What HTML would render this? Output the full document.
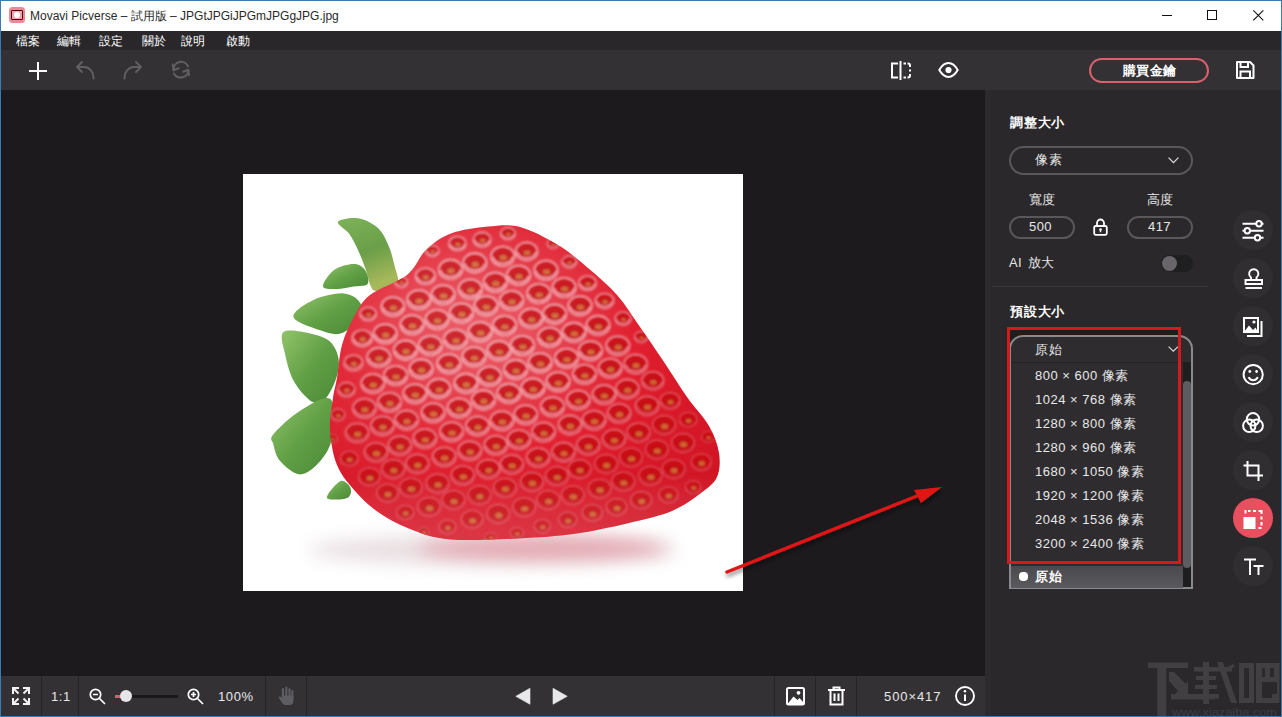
<!DOCTYPE html>
<html><head><meta charset="utf-8">
<style>
*{margin:0;padding:0;box-sizing:border-box}
html,body{width:1282px;height:717px;overflow:hidden;background:#1c1a1d;font-family:"Liberation Sans",sans-serif}
.a{position:absolute}
#win{position:absolute;left:0;top:0;width:1282px;height:717px;border:1px solid #3b7bb3;overflow:hidden;background:#1c1a1d}
#title{left:0;top:0;width:1280px;height:30px;background:#fff}
#menu{left:0;top:30px;width:1280px;height:19px;background:#29272a;color:#fff;font-size:12px}
#menu span{position:absolute;top:2px;white-space:nowrap}
#tool{left:0;top:49px;width:1280px;height:40px;background:#333134}
#canvas{left:0;top:89px;width:984px;height:586px;background:#1c1a1d}
#panel{left:984px;top:89px;width:296px;height:626px;background:#2a282b}
#bottom{left:0;top:675px;width:984px;height:40px;background:#333134}
.div{position:absolute;top:0;width:1px;height:40px;background:#242326}
.txt{position:absolute;white-space:nowrap;color:#fff}
#panel .txt{margin-top:-1px;letter-spacing:.4px}
#panel .li{letter-spacing:.5px;word-spacing:0}
#bottom .txt{letter-spacing:.6px}
svg{position:absolute;overflow:visible}
</style></head><body>
<div id="win">
<div id="title" class="a">
  <div class="a" style="left:8px;top:6px;width:15.5px;height:15.5px;border-radius:3.5px;background:#ea8a96"></div>
  <div class="a" style="left:10px;top:9px;width:12px;height:10px;border:1.5px solid #4a0812;border-radius:1px;background:#f2a4ae"></div>
  <div class="a" style="left:13.2px;top:11.2px;width:5.6px;height:5.6px;border-radius:3px;background:#fff"></div>
  <div class="txt" style="left:29px;top:7px;font-size:12px;color:#2a2a2a">Movavi Picverse – 試用版 – JPGtJPGiJPGmJPGgJPG.jpg</div>
  <div class="a" style="left:1161px;top:14px;width:10px;height:1px;background:#111"></div>
  <div class="a" style="left:1206px;top:9px;width:10px;height:10px;border:1px solid #111"></div>
  <svg style="left:1252px;top:8.8px" width="11" height="11" viewBox="0 0 11 11"><path d="M0.3 0.3L10.3 10.3M10.3 0.3L0.3 10.3" stroke="#111" stroke-width="1.1"/></svg>
</div>
<div id="menu" class="a">
  <span style="left:15px">檔案</span><span style="left:56px">編輯</span><span style="left:98px">設定</span><span style="left:141px">關於</span><span style="left:180px">說明</span><span style="left:225px">啟動</span>
</div>
<div id="tool" class="a">
  <svg style="left:28px;top:12px" width="18" height="18" viewBox="0 0 18 18"><path d="M9 0V18M0 9H18" stroke="#fff" stroke-width="2"/></svg>
  <svg style="left:-1px;top:-50px" width="300" height="100" viewBox="0 0 300 100"><g stroke="#605f63" stroke-width="2" fill="none" stroke-linecap="round" stroke-linejoin="round">
  <path d="M77 67H84A9.5 10.5 0 0 1 93.5 77.5V78.5M82 62L77 67L82 72"/>
  <path d="M141 67H134A9.5 10.5 0 0 0 124.5 77.5V78.5M136 62L141 67L136 72"/>
  <path d="M173.5 70A7.6 7.6 0 0 1 188 66.3M188.3 70A7.6 7.6 0 0 1 174 73.5"/>
  <path d="M172.8 64.5L173.5 70.2L178.5 68.2M189 75.2L188.3 69.8L183.3 71.8"/>
</g></svg>
  <svg style="left:889px;top:11px" width="22" height="19" viewBox="0 0 22 19"><g fill="#fff"><path d="M1 1.5H8V3.5H3V15.5H8V17.5H1Z"/><rect x="9.5" y="0" width="2" height="19"/><rect x="13.5" y="1.5" width="2.5" height="2"/><path d="M17.5 1.5H18A3 3 0 0 1 21 4.5V6H19V4.5A1 1 0 0 0 18 3.5H17.5Z"/><rect x="19" y="8.5" width="2" height="2"/><path d="M17.5 17.5H18A3 3 0 0 0 21 14.5V13H19V14.5A1 1 0 0 1 18 15.5H17.5Z"/><rect x="13.5" y="15.5" width="2.5" height="2"/></g></svg>
  <svg style="left:937px;top:12px" width="21" height="16" viewBox="0 0 21 16"><path d="M1.3 8C4.2 3 7.2 1.1 10.5 1.1S16.8 3 19.7 8C16.8 13 13.8 14.9 10.5 14.9S4.2 13 1.3 8Z" stroke="#fff" stroke-width="2" fill="none"/><circle cx="10.5" cy="8" r="3.1" fill="#fff"/></svg>
  <div class="a" style="left:1088px;top:8px;width:120px;height:25px;border:2px solid #d9606f;border-radius:13px"></div>
  <div class="txt" style="left:1122px;top:12px;font-size:13px;font-weight:bold;letter-spacing:.3px">購買金鑰</div>
  <svg style="left:1235px;top:11px" width="19" height="18" viewBox="0 0 19 18"><path d="M1 1H14L17.5 4.5V17H1Z" stroke="#fff" stroke-width="2" fill="none" stroke-linejoin="round"/><path d="M4.5 1V6H12V1M4.5 17V10.5H14V17" stroke="#fff" stroke-width="2" fill="none"/></svg>
</div>
<div id="canvas" class="a"><svg style="left:242px;top:84px" width="500" height="417" viewBox="0 0 500 417">
<defs>
<radialGradient id="bg" cx="0.4" cy="0.35" r="0.75"><stop offset="0" stop-color="#e8505c"/><stop offset="0.5" stop-color="#e01c2c"/><stop offset="1" stop-color="#d01424"/></radialGradient>
<linearGradient id="lg" x1="0" y1="0" x2="1" y2="1"><stop offset="0" stop-color="#92c46a"/><stop offset="0.5" stop-color="#62a046"/><stop offset="1" stop-color="#4a8a36"/></linearGradient><linearGradient id="lgA" x1="0" y1="0" x2="0.3" y2="1"><stop offset="0" stop-color="#7fb35a"/><stop offset="0.55" stop-color="#6a9e48"/><stop offset="1" stop-color="#a6b85a"/></linearGradient>
<clipPath id="bc"><path d="M164.0 101.0C173.3 93.5 175.7 82.9 183.0 76.0C190.3 69.1 197.7 63.4 208.0 59.5C218.3 55.6 233.5 53.6 245.0 52.5C256.5 51.4 265.3 49.9 277.0 53.0C288.7 56.1 303.7 64.2 315.0 71.0C326.3 77.8 335.2 85.7 345.0 94.0C354.8 102.3 365.3 111.2 374.0 121.0C382.7 130.8 389.2 141.8 397.0 153.0C404.8 164.2 413.2 176.3 421.0 188.0C428.8 199.7 436.5 212.3 444.0 223.0C451.5 233.7 460.7 242.7 466.0 252.0C471.3 261.3 474.7 270.5 476.0 279.0C477.3 287.5 477.0 296.3 474.0 303.0C471.0 309.7 465.5 313.3 458.0 319.0C450.5 324.7 440.3 332.2 429.0 337.0C417.7 341.8 405.3 344.3 390.0 348.0C374.7 351.7 354.8 356.3 337.0 359.0C319.2 361.7 304.5 362.9 283.0 364.0C261.5 365.1 227.3 367.0 208.0 365.5C188.7 364.0 179.2 359.6 167.0 355.0C154.8 350.4 144.2 344.3 135.0 338.0C125.8 331.7 118.8 324.8 112.0 317.0C105.2 309.2 98.2 301.2 94.0 291.0C89.8 280.8 87.7 267.2 87.0 256.0C86.3 244.8 88.8 232.7 90.0 224.0C91.2 215.3 92.5 212.8 94.0 204.0C95.5 195.2 96.2 181.2 99.0 171.0C101.8 160.8 106.3 151.3 111.0 143.0C115.7 134.7 118.2 128.0 127.0 121.0C135.8 114.0 154.7 108.5 164.0 101.0Z"/></clipPath>
<filter id="bl" x="-30%" y="-100%" width="160%" height="300%"><feGaussianBlur stdDeviation="9"/></filter>
<filter id="bl2"><feGaussianBlur stdDeviation="1"/></filter>
<radialGradient id="sheen" cx="0.38" cy="0.32" r="0.5"><stop offset="0" stop-color="#fff" stop-opacity=".12"/><stop offset="1" stop-color="#fff" stop-opacity="0"/></radialGradient>
<linearGradient id="btm" x1="0" y1="0" x2="0" y2="1"><stop offset="0.72" stop-color="#fff" stop-opacity="0"/><stop offset="0.86" stop-color="#ffd0d6" stop-opacity=".16"/></linearGradient>
</defs>
<rect width="500" height="417" fill="#fff"/>
<ellipse cx="250" cy="376" rx="185" ry="15" fill="#e3d6d9" opacity=".8" filter="url(#bl)"/><ellipse cx="300" cy="374" rx="125" ry="11" fill="#e28a98" opacity=".7" filter="url(#bl)"/>
<path d="M95.0 47.8C96.5 45.2 108.3 43.2 115.0 44.2C121.7 45.2 129.9 49.3 135.0 54.0C140.1 58.7 143.1 66.2 145.8 72.3C148.5 78.4 149.7 84.5 151.2 90.4C152.7 96.4 155.9 104.1 155.0 108.0C154.1 111.9 149.7 112.5 146.0 114.0C142.3 115.5 136.1 117.3 133.0 117.0C129.9 116.7 129.5 115.8 127.7 112.0C125.9 108.2 124.3 100.0 122.2 94.0C120.1 88.0 117.7 81.7 115.0 76.0C112.3 70.3 109.3 64.3 106.0 59.6C102.7 54.9 93.5 50.4 95.0 47.8Z" fill="url(#lgA)"/><path d="M80.0 112.5C79.5 109.3 85.9 99.8 91.0 96.0C96.1 92.2 105.5 90.0 110.7 90.0C115.9 90.0 119.7 92.7 122.0 96.0C124.3 99.3 126.6 107.0 124.7 109.7C122.8 112.5 115.8 111.6 110.7 112.5C105.6 113.4 99.1 115.0 94.0 115.0C88.9 115.0 80.5 115.7 80.0 112.5Z" fill="url(#lg)"/><path d="M50.5 142.9C49.4 137.8 62.2 129.9 70.6 126.0C79.0 122.1 93.0 118.8 100.8 119.4C108.6 120.0 115.4 125.0 117.6 129.5C119.8 134.0 117.5 141.2 114.2 146.2C110.9 151.2 103.7 157.9 97.5 159.6C91.3 161.3 85.1 159.1 77.3 156.3C69.5 153.5 51.6 148.0 50.5 142.9Z" fill="url(#lg)"/><path d="M40.5 158.0C44.7 154.6 59.5 157.9 67.3 159.6C75.1 161.3 82.7 163.5 87.4 168.0C92.2 172.5 95.0 180.1 95.8 186.5C96.6 192.9 94.9 199.9 92.4 206.6C89.9 213.3 84.9 223.3 80.7 226.7C76.5 230.0 72.3 230.0 67.3 226.7C62.3 223.3 54.7 214.4 50.5 206.6C46.3 198.8 43.7 187.9 42.0 179.8C40.3 171.7 36.3 161.4 40.5 158.0Z" fill="url(#lg)"/><path d="M30.4 260.2C34.9 254.6 47.7 242.6 57.2 236.7C66.7 230.8 82.1 220.5 87.4 225.0C92.7 229.5 90.7 253.3 89.0 263.6C87.3 273.9 82.6 280.9 77.3 287.0C72.0 293.1 63.9 300.4 57.2 300.4C50.5 300.4 41.6 292.0 37.1 287.0C32.6 282.0 31.5 274.8 30.4 270.3C29.3 265.8 25.9 265.8 30.4 260.2Z" fill="url(#lg)"/><path d="M84.0 323.9C82.9 321.1 93.6 308.7 97.5 307.0C101.4 305.3 106.4 311.1 107.5 313.9C108.6 316.7 108.1 322.2 104.2 323.9C100.3 325.6 85.1 326.7 84.0 323.9Z" fill="url(#lg)"/>
<path d="M164.0 101.0C173.3 93.5 175.7 82.9 183.0 76.0C190.3 69.1 197.7 63.4 208.0 59.5C218.3 55.6 233.5 53.6 245.0 52.5C256.5 51.4 265.3 49.9 277.0 53.0C288.7 56.1 303.7 64.2 315.0 71.0C326.3 77.8 335.2 85.7 345.0 94.0C354.8 102.3 365.3 111.2 374.0 121.0C382.7 130.8 389.2 141.8 397.0 153.0C404.8 164.2 413.2 176.3 421.0 188.0C428.8 199.7 436.5 212.3 444.0 223.0C451.5 233.7 460.7 242.7 466.0 252.0C471.3 261.3 474.7 270.5 476.0 279.0C477.3 287.5 477.0 296.3 474.0 303.0C471.0 309.7 465.5 313.3 458.0 319.0C450.5 324.7 440.3 332.2 429.0 337.0C417.7 341.8 405.3 344.3 390.0 348.0C374.7 351.7 354.8 356.3 337.0 359.0C319.2 361.7 304.5 362.9 283.0 364.0C261.5 365.1 227.3 367.0 208.0 365.5C188.7 364.0 179.2 359.6 167.0 355.0C154.8 350.4 144.2 344.3 135.0 338.0C125.8 331.7 118.8 324.8 112.0 317.0C105.2 309.2 98.2 301.2 94.0 291.0C89.8 280.8 87.7 267.2 87.0 256.0C86.3 244.8 88.8 232.7 90.0 224.0C91.2 215.3 92.5 212.8 94.0 204.0C95.5 195.2 96.2 181.2 99.0 171.0C101.8 160.8 106.3 151.3 111.0 143.0C115.7 134.7 118.2 128.0 127.0 121.0C135.8 114.0 154.7 108.5 164.0 101.0Z" fill="url(#bg)"/>
<g clip-path="url(#bc)"><g filter="url(#bl2)" opacity=".95"><ellipse cx="189.4" cy="77.0" rx="7.1" ry="6.0" fill="none" stroke="#fbc8cf" stroke-width="0.9" opacity="0.72"/><ellipse cx="189.4" cy="77.0" rx="6.1" ry="5.0" fill="#cc0816"/><ellipse cx="189.4" cy="78.0" rx="3.7" ry="3.0" fill="#b80612" opacity=".6"/><path d="M183.6 77.5A6.1 5.3 0 0 0 195.3 77.5" fill="none" stroke="#f9b4bc" stroke-width="1.1" opacity="0.90"/><ellipse cx="189.9" cy="77.8" rx="2.0" ry="1.5" fill="#d68a3c" opacity=".75"/><ellipse cx="214.4" cy="69.5" rx="9.0" ry="7.5" fill="none" stroke="#fbc8cf" stroke-width="1.2" opacity="0.72"/><ellipse cx="214.4" cy="69.5" rx="8.0" ry="6.5" fill="#cc0816"/><ellipse cx="214.4" cy="70.5" rx="4.8" ry="3.9" fill="#b80612" opacity=".6"/><path d="M206.8 70.2A8.0 6.9 0 0 0 222.0 70.2" fill="none" stroke="#f9b4bc" stroke-width="1.4" opacity="0.90"/><ellipse cx="214.9" cy="70.6" rx="2.6" ry="1.9" fill="#d68a3c" opacity=".75"/><ellipse cx="239.1" cy="65.6" rx="9.2" ry="7.7" fill="none" stroke="#fbc8cf" stroke-width="1.2" opacity="0.72"/><ellipse cx="239.1" cy="65.6" rx="8.2" ry="6.7" fill="#cc0816"/><ellipse cx="239.1" cy="66.6" rx="4.9" ry="4.0" fill="#b80612" opacity=".6"/><path d="M231.3 66.3A8.2 7.0 0 0 0 246.9 66.3" fill="none" stroke="#f9b4bc" stroke-width="1.4" opacity="0.90"/><ellipse cx="239.6" cy="66.7" rx="2.7" ry="1.9" fill="#d68a3c" opacity=".75"/><ellipse cx="264.9" cy="59.6" rx="7.8" ry="6.6" fill="none" stroke="#fbc8cf" stroke-width="1.0" opacity="0.72"/><ellipse cx="264.9" cy="59.6" rx="6.8" ry="5.6" fill="#cc0816"/><ellipse cx="264.9" cy="60.6" rx="4.1" ry="3.4" fill="#b80612" opacity=".6"/><path d="M258.4 60.2A6.8 5.9 0 0 0 271.4 60.2" fill="none" stroke="#f9b4bc" stroke-width="1.2" opacity="0.90"/><ellipse cx="265.4" cy="60.6" rx="2.2" ry="1.6" fill="#d68a3c" opacity=".75"/><ellipse cx="158.2" cy="108.2" rx="6.9" ry="5.9" fill="none" stroke="#fbc8cf" stroke-width="0.9" opacity="0.72"/><ellipse cx="158.2" cy="108.2" rx="5.9" ry="4.9" fill="#cc0816"/><ellipse cx="158.2" cy="109.2" rx="3.6" ry="2.9" fill="#b80612" opacity=".6"/><path d="M152.6 108.7A5.9 5.1 0 0 0 163.8 108.7" fill="none" stroke="#f9b4bc" stroke-width="1.1" opacity="0.90"/><ellipse cx="158.7" cy="109.0" rx="1.9" ry="1.4" fill="#d68a3c" opacity=".75"/><ellipse cx="182.4" cy="102.2" rx="10.2" ry="8.5" fill="none" stroke="#fbc8cf" stroke-width="1.3" opacity="0.72"/><ellipse cx="182.4" cy="102.2" rx="9.2" ry="7.5" fill="#cc0816"/><ellipse cx="182.4" cy="103.2" rx="5.5" ry="4.5" fill="#b80612" opacity=".6"/><path d="M173.7 103.0A9.2 7.9 0 0 0 191.2 103.0" fill="none" stroke="#f9b4bc" stroke-width="1.6" opacity="0.90"/><ellipse cx="182.9" cy="103.5" rx="3.0" ry="2.2" fill="#d68a3c" opacity=".75"/><ellipse cx="207.5" cy="95.4" rx="12.0" ry="10.0" fill="none" stroke="#fbc8cf" stroke-width="1.6" opacity="0.72"/><ellipse cx="207.5" cy="95.4" rx="11.0" ry="9.0" fill="#cc0816"/><ellipse cx="207.5" cy="96.4" rx="6.6" ry="5.4" fill="#b80612" opacity=".6"/><path d="M197.1 96.3A11.0 9.5 0 0 0 218.0 96.3" fill="none" stroke="#f9b4bc" stroke-width="1.8" opacity="0.90"/><ellipse cx="208.0" cy="96.9" rx="3.6" ry="2.6" fill="#d68a3c" opacity=".75"/><ellipse cx="231.8" cy="88.9" rx="12.0" ry="10.0" fill="none" stroke="#fbc8cf" stroke-width="1.6" opacity="0.72"/><ellipse cx="231.8" cy="88.9" rx="11.0" ry="9.0" fill="#cc0816"/><ellipse cx="231.8" cy="89.9" rx="6.6" ry="5.4" fill="#b80612" opacity=".6"/><path d="M221.4 89.8A11.0 9.5 0 0 0 242.3 89.8" fill="none" stroke="#f9b4bc" stroke-width="1.8" opacity="0.90"/><ellipse cx="232.3" cy="90.4" rx="3.6" ry="2.6" fill="#d68a3c" opacity=".75"/><ellipse cx="259.8" cy="82.2" rx="12.0" ry="10.0" fill="none" stroke="#fbc8cf" stroke-width="1.6" opacity="0.72"/><ellipse cx="259.8" cy="82.2" rx="11.0" ry="9.0" fill="#cc0816"/><ellipse cx="259.8" cy="83.2" rx="6.6" ry="5.4" fill="#b80612" opacity=".6"/><path d="M249.3 83.1A11.0 9.5 0 0 0 270.2 83.1" fill="none" stroke="#f9b4bc" stroke-width="1.8" opacity="0.90"/><ellipse cx="260.3" cy="83.7" rx="3.6" ry="2.6" fill="#d68a3c" opacity=".75"/><ellipse cx="283.6" cy="77.4" rx="11.2" ry="9.4" fill="none" stroke="#fbc8cf" stroke-width="1.5" opacity="0.72"/><ellipse cx="283.6" cy="77.4" rx="10.2" ry="8.4" fill="#cc0816"/><ellipse cx="283.6" cy="78.4" rx="6.1" ry="5.0" fill="#b80612" opacity=".6"/><path d="M273.9 78.2A10.2 8.8 0 0 0 293.3 78.2" fill="none" stroke="#f9b4bc" stroke-width="1.7" opacity="0.90"/><ellipse cx="284.1" cy="78.8" rx="3.3" ry="2.4" fill="#d68a3c" opacity=".75"/><ellipse cx="309.9" cy="69.9" rx="6.3" ry="5.3" fill="none" stroke="#fbc8cf" stroke-width="0.8" opacity="0.72"/><ellipse cx="309.9" cy="69.9" rx="5.3" ry="4.3" fill="#cc0816"/><ellipse cx="309.9" cy="70.9" rx="3.2" ry="2.6" fill="#b80612" opacity=".6"/><path d="M304.9 70.3A5.3 4.5 0 0 0 314.9 70.3" fill="none" stroke="#f9b4bc" stroke-width="1.0" opacity="0.90"/><ellipse cx="310.4" cy="70.6" rx="1.7" ry="1.2" fill="#d68a3c" opacity=".75"/><ellipse cx="125.1" cy="140.0" rx="8.6" ry="7.2" fill="none" stroke="#fbc8cf" stroke-width="1.1" opacity="0.71"/><ellipse cx="125.1" cy="140.0" rx="7.6" ry="6.2" fill="#cc0816"/><ellipse cx="125.1" cy="141.0" rx="4.6" ry="3.7" fill="#b80612" opacity=".6"/><path d="M117.9 140.6A7.6 6.5 0 0 0 132.4 140.6" fill="none" stroke="#f9b4bc" stroke-width="1.3" opacity="0.89"/><ellipse cx="125.6" cy="141.0" rx="2.5" ry="1.8" fill="#d68a3c" opacity=".75"/><ellipse cx="149.9" cy="132.6" rx="11.8" ry="9.8" fill="none" stroke="#fbc8cf" stroke-width="1.6" opacity="0.72"/><ellipse cx="149.9" cy="132.6" rx="10.8" ry="8.8" fill="#cc0816"/><ellipse cx="149.9" cy="133.6" rx="6.5" ry="5.3" fill="#b80612" opacity=".6"/><path d="M139.7 133.5A10.8 9.2 0 0 0 160.2 133.5" fill="none" stroke="#f9b4bc" stroke-width="1.8" opacity="0.90"/><ellipse cx="150.4" cy="134.1" rx="3.5" ry="2.5" fill="#d68a3c" opacity=".75"/><ellipse cx="175.8" cy="125.7" rx="12.0" ry="10.0" fill="none" stroke="#fbc8cf" stroke-width="1.6" opacity="0.72"/><ellipse cx="175.8" cy="125.7" rx="11.0" ry="9.0" fill="#cc0816"/><ellipse cx="175.8" cy="126.7" rx="6.6" ry="5.4" fill="#b80612" opacity=".6"/><path d="M165.4 126.6A11.0 9.5 0 0 0 186.3 126.6" fill="none" stroke="#f9b4bc" stroke-width="1.8" opacity="0.90"/><ellipse cx="176.3" cy="127.2" rx="3.6" ry="2.6" fill="#d68a3c" opacity=".75"/><ellipse cx="200.1" cy="120.7" rx="12.0" ry="10.0" fill="none" stroke="#fbc8cf" stroke-width="1.6" opacity="0.72"/><ellipse cx="200.1" cy="120.7" rx="11.0" ry="9.0" fill="#cc0816"/><ellipse cx="200.1" cy="121.7" rx="6.6" ry="5.4" fill="#b80612" opacity=".6"/><path d="M189.7 121.6A11.0 9.5 0 0 0 210.6 121.6" fill="none" stroke="#f9b4bc" stroke-width="1.8" opacity="0.90"/><ellipse cx="200.6" cy="122.2" rx="3.6" ry="2.6" fill="#d68a3c" opacity=".75"/><ellipse cx="227.3" cy="115.0" rx="12.0" ry="10.0" fill="none" stroke="#fbc8cf" stroke-width="1.6" opacity="0.72"/><ellipse cx="227.3" cy="115.0" rx="11.0" ry="9.0" fill="#cc0816"/><ellipse cx="227.3" cy="116.0" rx="6.6" ry="5.4" fill="#b80612" opacity=".6"/><path d="M216.9 115.9A11.0 9.5 0 0 0 237.8 115.9" fill="none" stroke="#f9b4bc" stroke-width="1.8" opacity="0.90"/><ellipse cx="227.8" cy="116.5" rx="3.6" ry="2.6" fill="#d68a3c" opacity=".75"/><ellipse cx="252.3" cy="108.2" rx="12.0" ry="10.0" fill="none" stroke="#fbc8cf" stroke-width="1.6" opacity="0.72"/><ellipse cx="252.3" cy="108.2" rx="11.0" ry="9.0" fill="#cc0816"/><ellipse cx="252.3" cy="109.2" rx="6.6" ry="5.4" fill="#b80612" opacity=".6"/><path d="M241.9 109.1A11.0 9.5 0 0 0 262.8 109.1" fill="none" stroke="#f9b4bc" stroke-width="1.8" opacity="0.90"/><ellipse cx="252.8" cy="109.7" rx="3.6" ry="2.6" fill="#d68a3c" opacity=".75"/><ellipse cx="275.6" cy="101.2" rx="12.0" ry="10.0" fill="none" stroke="#fbc8cf" stroke-width="1.6" opacity="0.72"/><ellipse cx="275.6" cy="101.2" rx="11.0" ry="9.0" fill="#cc0816"/><ellipse cx="275.6" cy="102.2" rx="6.6" ry="5.4" fill="#b80612" opacity=".6"/><path d="M265.2 102.1A11.0 9.5 0 0 0 286.1 102.1" fill="none" stroke="#f9b4bc" stroke-width="1.8" opacity="0.90"/><ellipse cx="276.1" cy="102.7" rx="3.6" ry="2.6" fill="#d68a3c" opacity=".75"/><ellipse cx="303.0" cy="96.3" rx="12.0" ry="10.0" fill="none" stroke="#fbc8cf" stroke-width="1.6" opacity="0.72"/><ellipse cx="303.0" cy="96.3" rx="11.0" ry="9.0" fill="#cc0816"/><ellipse cx="303.0" cy="97.3" rx="6.6" ry="5.4" fill="#b80612" opacity=".6"/><path d="M292.6 97.2A11.0 9.5 0 0 0 313.5 97.2" fill="none" stroke="#f9b4bc" stroke-width="1.8" opacity="0.90"/><ellipse cx="303.5" cy="97.8" rx="3.6" ry="2.6" fill="#d68a3c" opacity=".75"/><ellipse cx="326.3" cy="88.0" rx="7.8" ry="6.5" fill="none" stroke="#fbc8cf" stroke-width="1.0" opacity="0.72"/><ellipse cx="326.3" cy="88.0" rx="6.8" ry="5.5" fill="#cc0816"/><ellipse cx="326.3" cy="89.0" rx="4.1" ry="3.3" fill="#b80612" opacity=".6"/><path d="M319.9 88.5A6.8 5.8 0 0 0 332.7 88.5" fill="none" stroke="#f9b4bc" stroke-width="1.2" opacity="0.90"/><ellipse cx="326.8" cy="88.9" rx="2.2" ry="1.6" fill="#d68a3c" opacity=".75"/><ellipse cx="119.2" cy="164.2" rx="10.3" ry="8.6" fill="none" stroke="#fbc8cf" stroke-width="1.4" opacity="0.67"/><ellipse cx="119.2" cy="164.2" rx="9.3" ry="7.6" fill="#cc0816"/><ellipse cx="119.2" cy="165.2" rx="5.6" ry="4.6" fill="#b80612" opacity=".6"/><path d="M110.3 164.9A9.3 8.0 0 0 0 128.0 164.9" fill="none" stroke="#f9b4bc" stroke-width="1.6" opacity="0.84"/><ellipse cx="119.7" cy="165.5" rx="3.0" ry="2.2" fill="#d68a3c" opacity=".75"/><ellipse cx="142.2" cy="159.7" rx="12.0" ry="10.0" fill="none" stroke="#fbc8cf" stroke-width="1.6" opacity="0.72"/><ellipse cx="142.2" cy="159.7" rx="11.0" ry="9.0" fill="#cc0816"/><ellipse cx="142.2" cy="160.7" rx="6.6" ry="5.4" fill="#b80612" opacity=".6"/><path d="M131.7 160.6A11.0 9.5 0 0 0 152.6 160.6" fill="none" stroke="#f9b4bc" stroke-width="1.8" opacity="0.90"/><ellipse cx="142.7" cy="161.2" rx="3.6" ry="2.6" fill="#d68a3c" opacity=".75"/><ellipse cx="169.1" cy="150.7" rx="12.0" ry="10.0" fill="none" stroke="#fbc8cf" stroke-width="1.6" opacity="0.72"/><ellipse cx="169.1" cy="150.7" rx="11.0" ry="9.0" fill="#cc0816"/><ellipse cx="169.1" cy="151.7" rx="6.6" ry="5.4" fill="#b80612" opacity=".6"/><path d="M158.6 151.6A11.0 9.5 0 0 0 179.5 151.6" fill="none" stroke="#f9b4bc" stroke-width="1.8" opacity="0.90"/><ellipse cx="169.6" cy="152.2" rx="3.6" ry="2.6" fill="#d68a3c" opacity=".75"/><ellipse cx="194.1" cy="145.5" rx="12.0" ry="10.0" fill="none" stroke="#fbc8cf" stroke-width="1.6" opacity="0.72"/><ellipse cx="194.1" cy="145.5" rx="11.0" ry="9.0" fill="#cc0816"/><ellipse cx="194.1" cy="146.5" rx="6.6" ry="5.4" fill="#b80612" opacity=".6"/><path d="M183.6 146.4A11.0 9.5 0 0 0 204.5 146.4" fill="none" stroke="#f9b4bc" stroke-width="1.8" opacity="0.90"/><ellipse cx="194.6" cy="147.0" rx="3.6" ry="2.6" fill="#d68a3c" opacity=".75"/><ellipse cx="218.4" cy="139.0" rx="12.0" ry="10.0" fill="none" stroke="#fbc8cf" stroke-width="1.6" opacity="0.72"/><ellipse cx="218.4" cy="139.0" rx="11.0" ry="9.0" fill="#cc0816"/><ellipse cx="218.4" cy="140.0" rx="6.6" ry="5.4" fill="#b80612" opacity=".6"/><path d="M208.0 139.9A11.0 9.5 0 0 0 228.9 139.9" fill="none" stroke="#f9b4bc" stroke-width="1.8" opacity="0.90"/><ellipse cx="218.9" cy="140.5" rx="3.6" ry="2.6" fill="#d68a3c" opacity=".75"/><ellipse cx="243.0" cy="131.8" rx="12.0" ry="10.0" fill="none" stroke="#fbc8cf" stroke-width="1.6" opacity="0.72"/><ellipse cx="243.0" cy="131.8" rx="11.0" ry="9.0" fill="#cc0816"/><ellipse cx="243.0" cy="132.8" rx="6.6" ry="5.4" fill="#b80612" opacity=".6"/><path d="M232.6 132.7A11.0 9.5 0 0 0 253.5 132.7" fill="none" stroke="#f9b4bc" stroke-width="1.8" opacity="0.90"/><ellipse cx="243.5" cy="133.3" rx="3.6" ry="2.6" fill="#d68a3c" opacity=".75"/><ellipse cx="268.6" cy="126.5" rx="12.0" ry="10.0" fill="none" stroke="#fbc8cf" stroke-width="1.6" opacity="0.72"/><ellipse cx="268.6" cy="126.5" rx="11.0" ry="9.0" fill="#cc0816"/><ellipse cx="268.6" cy="127.5" rx="6.6" ry="5.4" fill="#b80612" opacity=".6"/><path d="M258.1 127.4A11.0 9.5 0 0 0 279.0 127.4" fill="none" stroke="#f9b4bc" stroke-width="1.8" opacity="0.90"/><ellipse cx="269.1" cy="128.0" rx="3.6" ry="2.6" fill="#d68a3c" opacity=".75"/><ellipse cx="295.8" cy="119.5" rx="12.0" ry="10.0" fill="none" stroke="#fbc8cf" stroke-width="1.6" opacity="0.72"/><ellipse cx="295.8" cy="119.5" rx="11.0" ry="9.0" fill="#cc0816"/><ellipse cx="295.8" cy="120.5" rx="6.6" ry="5.4" fill="#b80612" opacity=".6"/><path d="M285.4 120.4A11.0 9.5 0 0 0 306.3 120.4" fill="none" stroke="#f9b4bc" stroke-width="1.8" opacity="0.90"/><ellipse cx="296.3" cy="121.0" rx="3.6" ry="2.6" fill="#d68a3c" opacity=".75"/><ellipse cx="321.1" cy="113.5" rx="12.0" ry="10.0" fill="none" stroke="#fbc8cf" stroke-width="1.6" opacity="0.72"/><ellipse cx="321.1" cy="113.5" rx="11.0" ry="9.0" fill="#cc0816"/><ellipse cx="321.1" cy="114.5" rx="6.6" ry="5.4" fill="#b80612" opacity=".6"/><path d="M310.7 114.4A11.0 9.5 0 0 0 331.6 114.4" fill="none" stroke="#f9b4bc" stroke-width="1.8" opacity="0.90"/><ellipse cx="321.6" cy="115.0" rx="3.6" ry="2.6" fill="#d68a3c" opacity=".75"/><ellipse cx="344.5" cy="109.1" rx="9.1" ry="7.6" fill="none" stroke="#fbc8cf" stroke-width="1.2" opacity="0.72"/><ellipse cx="344.5" cy="109.1" rx="8.1" ry="6.6" fill="#cc0816"/><ellipse cx="344.5" cy="110.1" rx="4.8" ry="4.0" fill="#b80612" opacity=".6"/><path d="M336.8 109.7A8.1 6.9 0 0 0 352.2 109.7" fill="none" stroke="#f9b4bc" stroke-width="1.4" opacity="0.90"/><ellipse cx="345.0" cy="110.2" rx="2.6" ry="1.9" fill="#d68a3c" opacity=".75"/><ellipse cx="110.4" cy="188.9" rx="9.8" ry="8.2" fill="none" stroke="#fbc8cf" stroke-width="1.3" opacity="0.60"/><ellipse cx="110.4" cy="188.9" rx="8.8" ry="7.2" fill="#cc0816"/><ellipse cx="110.4" cy="189.9" rx="5.3" ry="4.3" fill="#b80612" opacity=".6"/><path d="M102.0 189.6A8.8 7.5 0 0 0 118.7 189.6" fill="none" stroke="#f9b4bc" stroke-width="1.5" opacity="0.74"/><ellipse cx="110.9" cy="190.1" rx="2.9" ry="2.1" fill="#d68a3c" opacity=".75"/><ellipse cx="135.7" cy="183.4" rx="12.0" ry="10.0" fill="none" stroke="#fbc8cf" stroke-width="1.6" opacity="0.68"/><ellipse cx="135.7" cy="183.4" rx="11.0" ry="9.0" fill="#cc0816"/><ellipse cx="135.7" cy="184.4" rx="6.6" ry="5.4" fill="#b80612" opacity=".6"/><path d="M125.3 184.3A11.0 9.5 0 0 0 146.2 184.3" fill="none" stroke="#f9b4bc" stroke-width="1.8" opacity="0.85"/><ellipse cx="136.2" cy="184.9" rx="3.6" ry="2.6" fill="#d68a3c" opacity=".75"/><ellipse cx="162.5" cy="176.1" rx="12.0" ry="10.0" fill="none" stroke="#fbc8cf" stroke-width="1.6" opacity="0.72"/><ellipse cx="162.5" cy="176.1" rx="11.0" ry="9.0" fill="#cc0816"/><ellipse cx="162.5" cy="177.1" rx="6.6" ry="5.4" fill="#b80612" opacity=".6"/><path d="M152.0 177.0A11.0 9.5 0 0 0 172.9 177.0" fill="none" stroke="#f9b4bc" stroke-width="1.8" opacity="0.90"/><ellipse cx="163.0" cy="177.6" rx="3.6" ry="2.6" fill="#d68a3c" opacity=".75"/><ellipse cx="187.3" cy="171.5" rx="12.0" ry="10.0" fill="none" stroke="#fbc8cf" stroke-width="1.6" opacity="0.72"/><ellipse cx="187.3" cy="171.5" rx="11.0" ry="9.0" fill="#cc0816"/><ellipse cx="187.3" cy="172.5" rx="6.6" ry="5.4" fill="#b80612" opacity=".6"/><path d="M176.9 172.4A11.0 9.5 0 0 0 197.8 172.4" fill="none" stroke="#f9b4bc" stroke-width="1.8" opacity="0.90"/><ellipse cx="187.8" cy="173.0" rx="3.6" ry="2.6" fill="#d68a3c" opacity=".75"/><ellipse cx="212.6" cy="165.3" rx="12.0" ry="10.0" fill="none" stroke="#fbc8cf" stroke-width="1.6" opacity="0.72"/><ellipse cx="212.6" cy="165.3" rx="11.0" ry="9.0" fill="#cc0816"/><ellipse cx="212.6" cy="166.3" rx="6.6" ry="5.4" fill="#b80612" opacity=".6"/><path d="M202.1 166.2A11.0 9.5 0 0 0 223.0 166.2" fill="none" stroke="#f9b4bc" stroke-width="1.8" opacity="0.90"/><ellipse cx="213.1" cy="166.8" rx="3.6" ry="2.6" fill="#d68a3c" opacity=".75"/><ellipse cx="237.2" cy="157.7" rx="12.0" ry="10.0" fill="none" stroke="#fbc8cf" stroke-width="1.6" opacity="0.72"/><ellipse cx="237.2" cy="157.7" rx="11.0" ry="9.0" fill="#cc0816"/><ellipse cx="237.2" cy="158.7" rx="6.6" ry="5.4" fill="#b80612" opacity=".6"/><path d="M226.7 158.6A11.0 9.5 0 0 0 247.6 158.6" fill="none" stroke="#f9b4bc" stroke-width="1.8" opacity="0.90"/><ellipse cx="237.7" cy="159.2" rx="3.6" ry="2.6" fill="#d68a3c" opacity=".75"/><ellipse cx="261.5" cy="151.5" rx="12.0" ry="10.0" fill="none" stroke="#fbc8cf" stroke-width="1.6" opacity="0.72"/><ellipse cx="261.5" cy="151.5" rx="11.0" ry="9.0" fill="#cc0816"/><ellipse cx="261.5" cy="152.5" rx="6.6" ry="5.4" fill="#b80612" opacity=".6"/><path d="M251.1 152.4A11.0 9.5 0 0 0 272.0 152.4" fill="none" stroke="#f9b4bc" stroke-width="1.8" opacity="0.90"/><ellipse cx="262.0" cy="153.0" rx="3.6" ry="2.6" fill="#d68a3c" opacity=".75"/><ellipse cx="288.2" cy="144.4" rx="12.0" ry="10.0" fill="none" stroke="#fbc8cf" stroke-width="1.6" opacity="0.72"/><ellipse cx="288.2" cy="144.4" rx="11.0" ry="9.0" fill="#cc0816"/><ellipse cx="288.2" cy="145.4" rx="6.6" ry="5.4" fill="#b80612" opacity=".6"/><path d="M277.7 145.3A11.0 9.5 0 0 0 298.6 145.3" fill="none" stroke="#f9b4bc" stroke-width="1.8" opacity="0.90"/><ellipse cx="288.7" cy="145.9" rx="3.6" ry="2.6" fill="#d68a3c" opacity=".75"/><ellipse cx="311.6" cy="140.1" rx="12.0" ry="10.0" fill="none" stroke="#fbc8cf" stroke-width="1.6" opacity="0.72"/><ellipse cx="311.6" cy="140.1" rx="11.0" ry="9.0" fill="#cc0816"/><ellipse cx="311.6" cy="141.1" rx="6.6" ry="5.4" fill="#b80612" opacity=".6"/><path d="M301.2 141.0A11.0 9.5 0 0 0 322.1 141.0" fill="none" stroke="#f9b4bc" stroke-width="1.8" opacity="0.90"/><ellipse cx="312.1" cy="141.6" rx="3.6" ry="2.6" fill="#d68a3c" opacity=".75"/><ellipse cx="337.0" cy="131.8" rx="12.0" ry="10.0" fill="none" stroke="#fbc8cf" stroke-width="1.6" opacity="0.72"/><ellipse cx="337.0" cy="131.8" rx="11.0" ry="9.0" fill="#cc0816"/><ellipse cx="337.0" cy="132.8" rx="6.6" ry="5.4" fill="#b80612" opacity=".6"/><path d="M326.6 132.7A11.0 9.5 0 0 0 347.5 132.7" fill="none" stroke="#f9b4bc" stroke-width="1.8" opacity="0.90"/><ellipse cx="337.5" cy="133.3" rx="3.6" ry="2.6" fill="#d68a3c" opacity=".75"/><ellipse cx="361.6" cy="126.9" rx="9.5" ry="7.9" fill="none" stroke="#fbc8cf" stroke-width="1.2" opacity="0.69"/><ellipse cx="361.6" cy="126.9" rx="8.5" ry="6.9" fill="#cc0816"/><ellipse cx="361.6" cy="127.9" rx="5.1" ry="4.2" fill="#b80612" opacity=".6"/><path d="M353.5 127.6A8.5 7.3 0 0 0 369.6 127.6" fill="none" stroke="#f9b4bc" stroke-width="1.5" opacity="0.86"/><ellipse cx="362.1" cy="128.1" rx="2.8" ry="2.0" fill="#d68a3c" opacity=".75"/><ellipse cx="103.5" cy="215.6" rx="9.1" ry="7.7" fill="none" stroke="#fbc8cf" stroke-width="1.2" opacity="0.49"/><ellipse cx="103.5" cy="215.6" rx="8.1" ry="6.7" fill="#cc0816"/><ellipse cx="103.5" cy="216.6" rx="4.9" ry="4.0" fill="#b80612" opacity=".6"/><path d="M95.7 216.3A8.1 7.0 0 0 0 111.2 216.3" fill="none" stroke="#f9b4bc" stroke-width="1.4" opacity="0.62"/><ellipse cx="104.0" cy="216.7" rx="2.7" ry="1.9" fill="#d68a3c" opacity=".75"/><ellipse cx="129.8" cy="209.6" rx="12.0" ry="10.0" fill="none" stroke="#fbc8cf" stroke-width="1.6" opacity="0.60"/><ellipse cx="129.8" cy="209.6" rx="11.0" ry="9.0" fill="#cc0816"/><ellipse cx="129.8" cy="210.6" rx="6.6" ry="5.4" fill="#b80612" opacity=".6"/><path d="M119.3 210.5A11.0 9.5 0 0 0 140.2 210.5" fill="none" stroke="#f9b4bc" stroke-width="1.8" opacity="0.75"/><ellipse cx="130.3" cy="211.1" rx="3.6" ry="2.6" fill="#d68a3c" opacity=".75"/><ellipse cx="152.6" cy="201.5" rx="12.0" ry="10.0" fill="none" stroke="#fbc8cf" stroke-width="1.6" opacity="0.68"/><ellipse cx="152.6" cy="201.5" rx="11.0" ry="9.0" fill="#cc0816"/><ellipse cx="152.6" cy="202.5" rx="6.6" ry="5.4" fill="#b80612" opacity=".6"/><path d="M142.2 202.4A11.0 9.5 0 0 0 163.1 202.4" fill="none" stroke="#f9b4bc" stroke-width="1.8" opacity="0.85"/><ellipse cx="153.1" cy="203.0" rx="3.6" ry="2.6" fill="#d68a3c" opacity=".75"/><ellipse cx="178.1" cy="194.9" rx="12.0" ry="10.0" fill="none" stroke="#fbc8cf" stroke-width="1.6" opacity="0.72"/><ellipse cx="178.1" cy="194.9" rx="11.0" ry="9.0" fill="#cc0816"/><ellipse cx="178.1" cy="195.9" rx="6.6" ry="5.4" fill="#b80612" opacity=".6"/><path d="M167.6 195.8A11.0 9.5 0 0 0 188.5 195.8" fill="none" stroke="#f9b4bc" stroke-width="1.8" opacity="0.90"/><ellipse cx="178.6" cy="196.4" rx="3.6" ry="2.6" fill="#d68a3c" opacity=".75"/><ellipse cx="205.9" cy="189.7" rx="12.0" ry="10.0" fill="none" stroke="#fbc8cf" stroke-width="1.6" opacity="0.72"/><ellipse cx="205.9" cy="189.7" rx="11.0" ry="9.0" fill="#cc0816"/><ellipse cx="205.9" cy="190.7" rx="6.6" ry="5.4" fill="#b80612" opacity=".6"/><path d="M195.4 190.6A11.0 9.5 0 0 0 216.3 190.6" fill="none" stroke="#f9b4bc" stroke-width="1.8" opacity="0.90"/><ellipse cx="206.4" cy="191.2" rx="3.6" ry="2.6" fill="#d68a3c" opacity=".75"/><ellipse cx="231.0" cy="182.8" rx="12.0" ry="10.0" fill="none" stroke="#fbc8cf" stroke-width="1.6" opacity="0.72"/><ellipse cx="231.0" cy="182.8" rx="11.0" ry="9.0" fill="#cc0816"/><ellipse cx="231.0" cy="183.8" rx="6.6" ry="5.4" fill="#b80612" opacity=".6"/><path d="M220.5 183.7A11.0 9.5 0 0 0 241.4 183.7" fill="none" stroke="#f9b4bc" stroke-width="1.8" opacity="0.90"/><ellipse cx="231.5" cy="184.3" rx="3.6" ry="2.6" fill="#d68a3c" opacity=".75"/><ellipse cx="256.0" cy="176.8" rx="12.0" ry="10.0" fill="none" stroke="#fbc8cf" stroke-width="1.6" opacity="0.72"/><ellipse cx="256.0" cy="176.8" rx="11.0" ry="9.0" fill="#cc0816"/><ellipse cx="256.0" cy="177.8" rx="6.6" ry="5.4" fill="#b80612" opacity=".6"/><path d="M245.6 177.7A11.0 9.5 0 0 0 266.5 177.7" fill="none" stroke="#f9b4bc" stroke-width="1.8" opacity="0.90"/><ellipse cx="256.5" cy="178.3" rx="3.6" ry="2.6" fill="#d68a3c" opacity=".75"/><ellipse cx="279.4" cy="171.5" rx="12.0" ry="10.0" fill="none" stroke="#fbc8cf" stroke-width="1.6" opacity="0.72"/><ellipse cx="279.4" cy="171.5" rx="11.0" ry="9.0" fill="#cc0816"/><ellipse cx="279.4" cy="172.5" rx="6.6" ry="5.4" fill="#b80612" opacity=".6"/><path d="M269.0 172.4A11.0 9.5 0 0 0 289.9 172.4" fill="none" stroke="#f9b4bc" stroke-width="1.8" opacity="0.90"/><ellipse cx="279.9" cy="173.0" rx="3.6" ry="2.6" fill="#d68a3c" opacity=".75"/><ellipse cx="306.7" cy="163.2" rx="12.0" ry="10.0" fill="none" stroke="#fbc8cf" stroke-width="1.6" opacity="0.72"/><ellipse cx="306.7" cy="163.2" rx="11.0" ry="9.0" fill="#cc0816"/><ellipse cx="306.7" cy="164.2" rx="6.6" ry="5.4" fill="#b80612" opacity=".6"/><path d="M296.3 164.1A11.0 9.5 0 0 0 317.2 164.1" fill="none" stroke="#f9b4bc" stroke-width="1.8" opacity="0.90"/><ellipse cx="307.2" cy="164.7" rx="3.6" ry="2.6" fill="#d68a3c" opacity=".75"/><ellipse cx="330.9" cy="158.4" rx="12.0" ry="10.0" fill="none" stroke="#fbc8cf" stroke-width="1.6" opacity="0.72"/><ellipse cx="330.9" cy="158.4" rx="11.0" ry="9.0" fill="#cc0816"/><ellipse cx="330.9" cy="159.4" rx="6.6" ry="5.4" fill="#b80612" opacity=".6"/><path d="M320.4 159.3A11.0 9.5 0 0 0 341.3 159.3" fill="none" stroke="#f9b4bc" stroke-width="1.8" opacity="0.90"/><ellipse cx="331.4" cy="159.9" rx="3.6" ry="2.6" fill="#d68a3c" opacity=".75"/><ellipse cx="355.0" cy="151.4" rx="12.0" ry="10.0" fill="none" stroke="#fbc8cf" stroke-width="1.6" opacity="0.70"/><ellipse cx="355.0" cy="151.4" rx="11.0" ry="9.0" fill="#cc0816"/><ellipse cx="355.0" cy="152.4" rx="6.6" ry="5.4" fill="#b80612" opacity=".6"/><path d="M344.5 152.3A11.0 9.5 0 0 0 365.4 152.3" fill="none" stroke="#f9b4bc" stroke-width="1.8" opacity="0.88"/><ellipse cx="355.5" cy="152.9" rx="3.6" ry="2.6" fill="#d68a3c" opacity=".75"/><ellipse cx="380.0" cy="144.6" rx="8.4" ry="7.1" fill="none" stroke="#fbc8cf" stroke-width="1.1" opacity="0.62"/><ellipse cx="380.0" cy="144.6" rx="7.4" ry="6.1" fill="#cc0816"/><ellipse cx="380.0" cy="145.6" rx="4.4" ry="3.6" fill="#b80612" opacity=".6"/><path d="M372.9 145.2A7.4 6.4 0 0 0 387.0 145.2" fill="none" stroke="#f9b4bc" stroke-width="1.3" opacity="0.78"/><ellipse cx="380.5" cy="145.6" rx="2.4" ry="1.7" fill="#d68a3c" opacity=".75"/><ellipse cx="94.9" cy="240.8" rx="7.7" ry="6.5" fill="none" stroke="#fbc8cf" stroke-width="1.0" opacity="0.36"/><ellipse cx="94.9" cy="240.8" rx="6.7" ry="5.5" fill="#cc0816"/><ellipse cx="94.9" cy="241.8" rx="4.0" ry="3.3" fill="#b80612" opacity=".6"/><path d="M88.5 241.4A6.7 5.8 0 0 0 101.3 241.4" fill="none" stroke="#f9b4bc" stroke-width="1.2" opacity="0.46"/><ellipse cx="95.4" cy="241.8" rx="2.2" ry="1.6" fill="#d68a3c" opacity=".75"/><ellipse cx="121.4" cy="234.3" rx="12.0" ry="10.0" fill="none" stroke="#fbc8cf" stroke-width="1.6" opacity="0.48"/><ellipse cx="121.4" cy="234.3" rx="11.0" ry="9.0" fill="#cc0816"/><ellipse cx="121.4" cy="235.3" rx="6.6" ry="5.4" fill="#b80612" opacity=".6"/><path d="M110.9 235.2A11.0 9.5 0 0 0 131.8 235.2" fill="none" stroke="#f9b4bc" stroke-width="1.8" opacity="0.60"/><ellipse cx="121.9" cy="235.8" rx="3.6" ry="2.6" fill="#d68a3c" opacity=".75"/><ellipse cx="146.5" cy="228.2" rx="12.0" ry="10.0" fill="none" stroke="#fbc8cf" stroke-width="1.6" opacity="0.58"/><ellipse cx="146.5" cy="228.2" rx="11.0" ry="9.0" fill="#cc0816"/><ellipse cx="146.5" cy="229.2" rx="6.6" ry="5.4" fill="#b80612" opacity=".6"/><path d="M136.1 229.1A11.0 9.5 0 0 0 157.0 229.1" fill="none" stroke="#f9b4bc" stroke-width="1.8" opacity="0.72"/><ellipse cx="147.0" cy="229.7" rx="3.6" ry="2.6" fill="#d68a3c" opacity=".75"/><ellipse cx="171.9" cy="219.7" rx="12.0" ry="10.0" fill="none" stroke="#fbc8cf" stroke-width="1.6" opacity="0.66"/><ellipse cx="171.9" cy="219.7" rx="11.0" ry="9.0" fill="#cc0816"/><ellipse cx="171.9" cy="220.7" rx="6.6" ry="5.4" fill="#b80612" opacity=".6"/><path d="M161.5 220.6A11.0 9.5 0 0 0 182.4 220.6" fill="none" stroke="#f9b4bc" stroke-width="1.8" opacity="0.82"/><ellipse cx="172.4" cy="221.2" rx="3.6" ry="2.6" fill="#d68a3c" opacity=".75"/><ellipse cx="195.8" cy="214.6" rx="12.0" ry="10.0" fill="none" stroke="#fbc8cf" stroke-width="1.6" opacity="0.71"/><ellipse cx="195.8" cy="214.6" rx="11.0" ry="9.0" fill="#cc0816"/><ellipse cx="195.8" cy="215.6" rx="6.6" ry="5.4" fill="#b80612" opacity=".6"/><path d="M185.4 215.5A11.0 9.5 0 0 0 206.3 215.5" fill="none" stroke="#f9b4bc" stroke-width="1.8" opacity="0.89"/><ellipse cx="196.3" cy="216.1" rx="3.6" ry="2.6" fill="#d68a3c" opacity=".75"/><ellipse cx="222.9" cy="209.4" rx="12.0" ry="10.0" fill="none" stroke="#fbc8cf" stroke-width="1.6" opacity="0.72"/><ellipse cx="222.9" cy="209.4" rx="11.0" ry="9.0" fill="#cc0816"/><ellipse cx="222.9" cy="210.4" rx="6.6" ry="5.4" fill="#b80612" opacity=".6"/><path d="M212.5 210.3A11.0 9.5 0 0 0 233.4 210.3" fill="none" stroke="#f9b4bc" stroke-width="1.8" opacity="0.90"/><ellipse cx="223.4" cy="210.9" rx="3.6" ry="2.6" fill="#d68a3c" opacity=".75"/><ellipse cx="246.5" cy="202.3" rx="12.0" ry="10.0" fill="none" stroke="#fbc8cf" stroke-width="1.6" opacity="0.72"/><ellipse cx="246.5" cy="202.3" rx="11.0" ry="9.0" fill="#cc0816"/><ellipse cx="246.5" cy="203.3" rx="6.6" ry="5.4" fill="#b80612" opacity=".6"/><path d="M236.1 203.2A11.0 9.5 0 0 0 257.0 203.2" fill="none" stroke="#f9b4bc" stroke-width="1.8" opacity="0.90"/><ellipse cx="247.0" cy="203.8" rx="3.6" ry="2.6" fill="#d68a3c" opacity=".75"/><ellipse cx="272.6" cy="195.6" rx="12.0" ry="10.0" fill="none" stroke="#fbc8cf" stroke-width="1.6" opacity="0.72"/><ellipse cx="272.6" cy="195.6" rx="11.0" ry="9.0" fill="#cc0816"/><ellipse cx="272.6" cy="196.6" rx="6.6" ry="5.4" fill="#b80612" opacity=".6"/><path d="M262.1 196.5A11.0 9.5 0 0 0 283.0 196.5" fill="none" stroke="#f9b4bc" stroke-width="1.8" opacity="0.90"/><ellipse cx="273.1" cy="197.1" rx="3.6" ry="2.6" fill="#d68a3c" opacity=".75"/><ellipse cx="297.1" cy="188.7" rx="12.0" ry="10.0" fill="none" stroke="#fbc8cf" stroke-width="1.6" opacity="0.72"/><ellipse cx="297.1" cy="188.7" rx="11.0" ry="9.0" fill="#cc0816"/><ellipse cx="297.1" cy="189.7" rx="6.6" ry="5.4" fill="#b80612" opacity=".6"/><path d="M286.7 189.6A11.0 9.5 0 0 0 307.6 189.6" fill="none" stroke="#f9b4bc" stroke-width="1.8" opacity="0.90"/><ellipse cx="297.6" cy="190.2" rx="3.6" ry="2.6" fill="#d68a3c" opacity=".75"/><ellipse cx="323.5" cy="184.3" rx="12.0" ry="10.0" fill="none" stroke="#fbc8cf" stroke-width="1.6" opacity="0.72"/><ellipse cx="323.5" cy="184.3" rx="11.0" ry="9.0" fill="#cc0816"/><ellipse cx="323.5" cy="185.3" rx="6.6" ry="5.4" fill="#b80612" opacity=".6"/><path d="M313.0 185.2A11.0 9.5 0 0 0 333.9 185.2" fill="none" stroke="#f9b4bc" stroke-width="1.8" opacity="0.90"/><ellipse cx="324.0" cy="185.8" rx="3.6" ry="2.6" fill="#d68a3c" opacity=".75"/><ellipse cx="347.5" cy="176.7" rx="12.0" ry="10.0" fill="none" stroke="#fbc8cf" stroke-width="1.6" opacity="0.69"/><ellipse cx="347.5" cy="176.7" rx="11.0" ry="9.0" fill="#cc0816"/><ellipse cx="347.5" cy="177.7" rx="6.6" ry="5.4" fill="#b80612" opacity=".6"/><path d="M337.0 177.6A11.0 9.5 0 0 0 357.9 177.6" fill="none" stroke="#f9b4bc" stroke-width="1.8" opacity="0.86"/><ellipse cx="348.0" cy="178.2" rx="3.6" ry="2.6" fill="#d68a3c" opacity=".75"/><ellipse cx="374.8" cy="171.8" rx="12.0" ry="10.0" fill="none" stroke="#fbc8cf" stroke-width="1.6" opacity="0.61"/><ellipse cx="374.8" cy="171.8" rx="11.0" ry="9.0" fill="#cc0816"/><ellipse cx="374.8" cy="172.8" rx="6.6" ry="5.4" fill="#b80612" opacity=".6"/><path d="M364.3 172.7A11.0 9.5 0 0 0 385.2 172.7" fill="none" stroke="#f9b4bc" stroke-width="1.8" opacity="0.77"/><ellipse cx="375.3" cy="173.3" rx="3.6" ry="2.6" fill="#d68a3c" opacity=".75"/><ellipse cx="398.2" cy="163.0" rx="7.2" ry="6.1" fill="none" stroke="#fbc8cf" stroke-width="0.9" opacity="0.54"/><ellipse cx="398.2" cy="163.0" rx="6.2" ry="5.1" fill="#cc0816"/><ellipse cx="398.2" cy="164.0" rx="3.7" ry="3.1" fill="#b80612" opacity=".6"/><path d="M392.3 163.5A6.2 5.4 0 0 0 404.1 163.5" fill="none" stroke="#f9b4bc" stroke-width="1.2" opacity="0.67"/><ellipse cx="398.7" cy="163.9" rx="2.0" ry="1.5" fill="#d68a3c" opacity=".75"/><ellipse cx="89.0" cy="264.9" rx="6.0" ry="5.1" fill="none" stroke="#fbc8cf" stroke-width="0.7" opacity="0.22"/><ellipse cx="89.0" cy="264.9" rx="5.0" ry="4.1" fill="#cc0816"/><ellipse cx="89.0" cy="265.9" rx="3.0" ry="2.5" fill="#b80612" opacity=".6"/><path d="M84.2 265.3A5.0 4.3 0 0 0 93.7 265.3" fill="none" stroke="#f9b4bc" stroke-width="1.0" opacity="0.28"/><ellipse cx="89.5" cy="265.5" rx="1.6" ry="1.2" fill="#d68a3c" opacity=".75"/><ellipse cx="114.2" cy="258.8" rx="12.0" ry="10.0" fill="none" stroke="#fbc8cf" stroke-width="1.6" opacity="0.35"/><ellipse cx="114.2" cy="258.8" rx="11.0" ry="9.0" fill="#cc0816"/><ellipse cx="114.2" cy="259.8" rx="6.6" ry="5.4" fill="#b80612" opacity=".6"/><path d="M103.8 259.7A11.0 9.5 0 0 0 124.7 259.7" fill="none" stroke="#f9b4bc" stroke-width="1.8" opacity="0.43"/><ellipse cx="114.7" cy="260.3" rx="3.6" ry="2.6" fill="#d68a3c" opacity=".75"/><ellipse cx="139.5" cy="251.8" rx="12.0" ry="10.0" fill="none" stroke="#fbc8cf" stroke-width="1.6" opacity="0.45"/><ellipse cx="139.5" cy="251.8" rx="11.0" ry="9.0" fill="#cc0816"/><ellipse cx="139.5" cy="252.8" rx="6.6" ry="5.4" fill="#b80612" opacity=".6"/><path d="M129.1 252.7A11.0 9.5 0 0 0 150.0 252.7" fill="none" stroke="#f9b4bc" stroke-width="1.8" opacity="0.57"/><ellipse cx="140.0" cy="253.3" rx="3.6" ry="2.6" fill="#d68a3c" opacity=".75"/><ellipse cx="163.5" cy="246.1" rx="12.0" ry="10.0" fill="none" stroke="#fbc8cf" stroke-width="1.6" opacity="0.54"/><ellipse cx="163.5" cy="246.1" rx="11.0" ry="9.0" fill="#cc0816"/><ellipse cx="163.5" cy="247.1" rx="6.6" ry="5.4" fill="#b80612" opacity=".6"/><path d="M153.0 247.0A11.0 9.5 0 0 0 173.9 247.0" fill="none" stroke="#f9b4bc" stroke-width="1.8" opacity="0.67"/><ellipse cx="164.0" cy="247.6" rx="3.6" ry="2.6" fill="#d68a3c" opacity=".75"/><ellipse cx="190.1" cy="238.7" rx="12.0" ry="10.0" fill="none" stroke="#fbc8cf" stroke-width="1.6" opacity="0.61"/><ellipse cx="190.1" cy="238.7" rx="11.0" ry="9.0" fill="#cc0816"/><ellipse cx="190.1" cy="239.7" rx="6.6" ry="5.4" fill="#b80612" opacity=".6"/><path d="M179.6 239.6A11.0 9.5 0 0 0 200.5 239.6" fill="none" stroke="#f9b4bc" stroke-width="1.8" opacity="0.77"/><ellipse cx="190.6" cy="240.2" rx="3.6" ry="2.6" fill="#d68a3c" opacity=".75"/><ellipse cx="216.1" cy="234.0" rx="12.0" ry="10.0" fill="none" stroke="#fbc8cf" stroke-width="1.6" opacity="0.66"/><ellipse cx="216.1" cy="234.0" rx="11.0" ry="9.0" fill="#cc0816"/><ellipse cx="216.1" cy="235.0" rx="6.6" ry="5.4" fill="#b80612" opacity=".6"/><path d="M205.7 234.9A11.0 9.5 0 0 0 226.6 234.9" fill="none" stroke="#f9b4bc" stroke-width="1.8" opacity="0.82"/><ellipse cx="216.6" cy="235.5" rx="3.6" ry="2.6" fill="#d68a3c" opacity=".75"/><ellipse cx="240.4" cy="225.9" rx="12.0" ry="10.0" fill="none" stroke="#fbc8cf" stroke-width="1.6" opacity="0.70"/><ellipse cx="240.4" cy="225.9" rx="11.0" ry="9.0" fill="#cc0816"/><ellipse cx="240.4" cy="226.9" rx="6.6" ry="5.4" fill="#b80612" opacity=".6"/><path d="M230.0 226.8A11.0 9.5 0 0 0 250.9 226.8" fill="none" stroke="#f9b4bc" stroke-width="1.8" opacity="0.87"/><ellipse cx="240.9" cy="227.4" rx="3.6" ry="2.6" fill="#d68a3c" opacity=".75"/><ellipse cx="265.7" cy="219.4" rx="12.0" ry="10.0" fill="none" stroke="#fbc8cf" stroke-width="1.6" opacity="0.71"/><ellipse cx="265.7" cy="219.4" rx="11.0" ry="9.0" fill="#cc0816"/><ellipse cx="265.7" cy="220.4" rx="6.6" ry="5.4" fill="#b80612" opacity=".6"/><path d="M255.3 220.3A11.0 9.5 0 0 0 276.2 220.3" fill="none" stroke="#f9b4bc" stroke-width="1.8" opacity="0.89"/><ellipse cx="266.2" cy="220.9" rx="3.6" ry="2.6" fill="#d68a3c" opacity=".75"/><ellipse cx="289.9" cy="214.1" rx="12.0" ry="10.0" fill="none" stroke="#fbc8cf" stroke-width="1.6" opacity="0.71"/><ellipse cx="289.9" cy="214.1" rx="11.0" ry="9.0" fill="#cc0816"/><ellipse cx="289.9" cy="215.1" rx="6.6" ry="5.4" fill="#b80612" opacity=".6"/><path d="M279.5 215.0A11.0 9.5 0 0 0 300.4 215.0" fill="none" stroke="#f9b4bc" stroke-width="1.8" opacity="0.88"/><ellipse cx="290.4" cy="215.6" rx="3.6" ry="2.6" fill="#d68a3c" opacity=".75"/><ellipse cx="315.0" cy="207.8" rx="12.0" ry="10.0" fill="none" stroke="#fbc8cf" stroke-width="1.6" opacity="0.69"/><ellipse cx="315.0" cy="207.8" rx="11.0" ry="9.0" fill="#cc0816"/><ellipse cx="315.0" cy="208.8" rx="6.6" ry="5.4" fill="#b80612" opacity=".6"/><path d="M304.6 208.7A11.0 9.5 0 0 0 325.5 208.7" fill="none" stroke="#f9b4bc" stroke-width="1.8" opacity="0.86"/><ellipse cx="315.5" cy="209.3" rx="3.6" ry="2.6" fill="#d68a3c" opacity=".75"/><ellipse cx="341.5" cy="200.3" rx="12.0" ry="10.0" fill="none" stroke="#fbc8cf" stroke-width="1.6" opacity="0.65"/><ellipse cx="341.5" cy="200.3" rx="11.0" ry="9.0" fill="#cc0816"/><ellipse cx="341.5" cy="201.3" rx="6.6" ry="5.4" fill="#b80612" opacity=".6"/><path d="M331.1 201.2A11.0 9.5 0 0 0 352.0 201.2" fill="none" stroke="#f9b4bc" stroke-width="1.8" opacity="0.81"/><ellipse cx="342.0" cy="201.8" rx="3.6" ry="2.6" fill="#d68a3c" opacity=".75"/><ellipse cx="367.1" cy="194.2" rx="12.0" ry="10.0" fill="none" stroke="#fbc8cf" stroke-width="1.6" opacity="0.59"/><ellipse cx="367.1" cy="194.2" rx="11.0" ry="9.0" fill="#cc0816"/><ellipse cx="367.1" cy="195.2" rx="6.6" ry="5.4" fill="#b80612" opacity=".6"/><path d="M356.7 195.1A11.0 9.5 0 0 0 377.6 195.1" fill="none" stroke="#f9b4bc" stroke-width="1.8" opacity="0.74"/><ellipse cx="367.6" cy="195.7" rx="3.6" ry="2.6" fill="#d68a3c" opacity=".75"/><ellipse cx="392.6" cy="190.0" rx="12.0" ry="10.0" fill="none" stroke="#fbc8cf" stroke-width="1.6" opacity="0.51"/><ellipse cx="392.6" cy="190.0" rx="11.0" ry="9.0" fill="#cc0816"/><ellipse cx="392.6" cy="191.0" rx="6.6" ry="5.4" fill="#b80612" opacity=".6"/><path d="M382.2 190.9A11.0 9.5 0 0 0 403.1 190.9" fill="none" stroke="#f9b4bc" stroke-width="1.8" opacity="0.64"/><ellipse cx="393.1" cy="191.5" rx="3.6" ry="2.6" fill="#d68a3c" opacity=".75"/><ellipse cx="106.2" cy="284.6" rx="9.6" ry="8.0" fill="none" stroke="#fbc8cf" stroke-width="1.3" opacity="0.17"/><ellipse cx="106.2" cy="284.6" rx="8.6" ry="7.0" fill="#cc0816"/><ellipse cx="106.2" cy="285.6" rx="5.2" ry="4.2" fill="#b80612" opacity=".6"/><path d="M98.1 285.3A8.6 7.4 0 0 0 114.4 285.3" fill="none" stroke="#f9b4bc" stroke-width="1.5" opacity="0.22"/><ellipse cx="106.7" cy="285.8" rx="2.8" ry="2.0" fill="#d68a3c" opacity=".75"/><ellipse cx="133.0" cy="278.2" rx="12.0" ry="10.0" fill="none" stroke="#fbc8cf" stroke-width="1.6" opacity="0.29"/><ellipse cx="133.0" cy="278.2" rx="11.0" ry="9.0" fill="#cc0816"/><ellipse cx="133.0" cy="279.2" rx="6.6" ry="5.4" fill="#b80612" opacity=".6"/><path d="M122.6 279.1A11.0 9.5 0 0 0 143.5 279.1" fill="none" stroke="#f9b4bc" stroke-width="1.8" opacity="0.37"/><ellipse cx="133.5" cy="279.7" rx="3.6" ry="2.6" fill="#d68a3c" opacity=".75"/><ellipse cx="156.7" cy="271.6" rx="12.0" ry="10.0" fill="none" stroke="#fbc8cf" stroke-width="1.6" opacity="0.39"/><ellipse cx="156.7" cy="271.6" rx="11.0" ry="9.0" fill="#cc0816"/><ellipse cx="156.7" cy="272.6" rx="6.6" ry="5.4" fill="#b80612" opacity=".6"/><path d="M146.3 272.5A11.0 9.5 0 0 0 167.2 272.5" fill="none" stroke="#f9b4bc" stroke-width="1.8" opacity="0.49"/><ellipse cx="157.2" cy="273.1" rx="3.6" ry="2.6" fill="#d68a3c" opacity=".75"/><ellipse cx="181.8" cy="264.5" rx="12.0" ry="10.0" fill="none" stroke="#fbc8cf" stroke-width="1.6" opacity="0.47"/><ellipse cx="181.8" cy="264.5" rx="11.0" ry="9.0" fill="#cc0816"/><ellipse cx="181.8" cy="265.5" rx="6.6" ry="5.4" fill="#b80612" opacity=".6"/><path d="M171.3 265.4A11.0 9.5 0 0 0 192.2 265.4" fill="none" stroke="#f9b4bc" stroke-width="1.8" opacity="0.59"/><ellipse cx="182.3" cy="266.0" rx="3.6" ry="2.6" fill="#d68a3c" opacity=".75"/><ellipse cx="208.6" cy="257.7" rx="12.0" ry="10.0" fill="none" stroke="#fbc8cf" stroke-width="1.6" opacity="0.54"/><ellipse cx="208.6" cy="257.7" rx="11.0" ry="9.0" fill="#cc0816"/><ellipse cx="208.6" cy="258.7" rx="6.6" ry="5.4" fill="#b80612" opacity=".6"/><path d="M198.1 258.6A11.0 9.5 0 0 0 219.0 258.6" fill="none" stroke="#f9b4bc" stroke-width="1.8" opacity="0.68"/><ellipse cx="209.1" cy="259.2" rx="3.6" ry="2.6" fill="#d68a3c" opacity=".75"/><ellipse cx="234.5" cy="252.0" rx="12.0" ry="10.0" fill="none" stroke="#fbc8cf" stroke-width="1.6" opacity="0.58"/><ellipse cx="234.5" cy="252.0" rx="11.0" ry="9.0" fill="#cc0816"/><ellipse cx="234.5" cy="253.0" rx="6.6" ry="5.4" fill="#b80612" opacity=".6"/><path d="M224.1 252.9A11.0 9.5 0 0 0 245.0 252.9" fill="none" stroke="#f9b4bc" stroke-width="1.8" opacity="0.73"/><ellipse cx="235.0" cy="253.5" rx="3.6" ry="2.6" fill="#d68a3c" opacity=".75"/><ellipse cx="258.9" cy="246.7" rx="12.0" ry="10.0" fill="none" stroke="#fbc8cf" stroke-width="1.6" opacity="0.60"/><ellipse cx="258.9" cy="246.7" rx="11.0" ry="9.0" fill="#cc0816"/><ellipse cx="258.9" cy="247.7" rx="6.6" ry="5.4" fill="#b80612" opacity=".6"/><path d="M248.4 247.6A11.0 9.5 0 0 0 269.3 247.6" fill="none" stroke="#f9b4bc" stroke-width="1.8" opacity="0.75"/><ellipse cx="259.4" cy="248.2" rx="3.6" ry="2.6" fill="#d68a3c" opacity=".75"/><ellipse cx="282.7" cy="240.7" rx="12.0" ry="10.0" fill="none" stroke="#fbc8cf" stroke-width="1.6" opacity="0.61"/><ellipse cx="282.7" cy="240.7" rx="11.0" ry="9.0" fill="#cc0816"/><ellipse cx="282.7" cy="241.7" rx="6.6" ry="5.4" fill="#b80612" opacity=".6"/><path d="M272.2 241.6A11.0 9.5 0 0 0 293.1 241.6" fill="none" stroke="#f9b4bc" stroke-width="1.8" opacity="0.76"/><ellipse cx="283.2" cy="242.2" rx="3.6" ry="2.6" fill="#d68a3c" opacity=".75"/><ellipse cx="309.5" cy="232.7" rx="12.0" ry="10.0" fill="none" stroke="#fbc8cf" stroke-width="1.6" opacity="0.61"/><ellipse cx="309.5" cy="232.7" rx="11.0" ry="9.0" fill="#cc0816"/><ellipse cx="309.5" cy="233.7" rx="6.6" ry="5.4" fill="#b80612" opacity=".6"/><path d="M299.0 233.6A11.0 9.5 0 0 0 319.9 233.6" fill="none" stroke="#f9b4bc" stroke-width="1.8" opacity="0.76"/><ellipse cx="310.0" cy="234.2" rx="3.6" ry="2.6" fill="#d68a3c" opacity=".75"/><ellipse cx="335.2" cy="226.0" rx="12.0" ry="10.0" fill="none" stroke="#fbc8cf" stroke-width="1.6" opacity="0.58"/><ellipse cx="335.2" cy="226.0" rx="11.0" ry="9.0" fill="#cc0816"/><ellipse cx="335.2" cy="227.0" rx="6.6" ry="5.4" fill="#b80612" opacity=".6"/><path d="M324.8 226.9A11.0 9.5 0 0 0 345.7 226.9" fill="none" stroke="#f9b4bc" stroke-width="1.8" opacity="0.72"/><ellipse cx="335.7" cy="227.5" rx="3.6" ry="2.6" fill="#d68a3c" opacity=".75"/><ellipse cx="361.0" cy="220.6" rx="12.0" ry="10.0" fill="none" stroke="#fbc8cf" stroke-width="1.6" opacity="0.53"/><ellipse cx="361.0" cy="220.6" rx="11.0" ry="9.0" fill="#cc0816"/><ellipse cx="361.0" cy="221.6" rx="6.6" ry="5.4" fill="#b80612" opacity=".6"/><path d="M350.6 221.5A11.0 9.5 0 0 0 371.5 221.5" fill="none" stroke="#f9b4bc" stroke-width="1.8" opacity="0.66"/><ellipse cx="361.5" cy="222.1" rx="3.6" ry="2.6" fill="#d68a3c" opacity=".75"/><ellipse cx="384.3" cy="214.9" rx="12.0" ry="10.0" fill="none" stroke="#fbc8cf" stroke-width="1.6" opacity="0.47"/><ellipse cx="384.3" cy="214.9" rx="11.0" ry="9.0" fill="#cc0816"/><ellipse cx="384.3" cy="215.9" rx="6.6" ry="5.4" fill="#b80612" opacity=".6"/><path d="M373.9 215.8A11.0 9.5 0 0 0 394.8 215.8" fill="none" stroke="#f9b4bc" stroke-width="1.8" opacity="0.59"/><ellipse cx="384.8" cy="216.4" rx="3.6" ry="2.6" fill="#d68a3c" opacity=".75"/><ellipse cx="409.8" cy="206.8" rx="11.4" ry="9.5" fill="none" stroke="#fbc8cf" stroke-width="1.5" opacity="0.39"/><ellipse cx="409.8" cy="206.8" rx="10.4" ry="8.5" fill="#cc0816"/><ellipse cx="409.8" cy="207.8" rx="6.2" ry="5.1" fill="#b80612" opacity=".6"/><path d="M400.0 207.7A10.4 8.9 0 0 0 419.7 207.7" fill="none" stroke="#f9b4bc" stroke-width="1.7" opacity="0.49"/><ellipse cx="410.3" cy="208.3" rx="3.4" ry="2.4" fill="#d68a3c" opacity=".75"/><ellipse cx="126.4" cy="302.8" rx="11.4" ry="9.5" fill="none" stroke="#fbc8cf" stroke-width="1.5" opacity="0.16"/><ellipse cx="126.4" cy="302.8" rx="10.4" ry="8.5" fill="#cc0816"/><ellipse cx="126.4" cy="303.8" rx="6.3" ry="5.1" fill="#b80612" opacity=".6"/><path d="M116.5 303.7A10.4 9.0 0 0 0 136.3 303.7" fill="none" stroke="#f9b4bc" stroke-width="1.7" opacity="0.20"/><ellipse cx="126.9" cy="304.2" rx="3.4" ry="2.5" fill="#d68a3c" opacity=".75"/><ellipse cx="150.3" cy="295.0" rx="12.0" ry="10.0" fill="none" stroke="#fbc8cf" stroke-width="1.6" opacity="0.23"/><ellipse cx="150.3" cy="295.0" rx="11.0" ry="9.0" fill="#cc0816"/><ellipse cx="150.3" cy="296.0" rx="6.6" ry="5.4" fill="#b80612" opacity=".6"/><path d="M139.8 295.9A11.0 9.5 0 0 0 160.7 295.9" fill="none" stroke="#f9b4bc" stroke-width="1.8" opacity="0.29"/><ellipse cx="150.8" cy="296.5" rx="3.6" ry="2.6" fill="#d68a3c" opacity=".75"/><ellipse cx="174.3" cy="289.8" rx="12.0" ry="10.0" fill="none" stroke="#fbc8cf" stroke-width="1.6" opacity="0.31"/><ellipse cx="174.3" cy="289.8" rx="11.0" ry="9.0" fill="#cc0816"/><ellipse cx="174.3" cy="290.8" rx="6.6" ry="5.4" fill="#b80612" opacity=".6"/><path d="M163.9 290.7A11.0 9.5 0 0 0 184.8 290.7" fill="none" stroke="#f9b4bc" stroke-width="1.8" opacity="0.39"/><ellipse cx="174.8" cy="291.3" rx="3.6" ry="2.6" fill="#d68a3c" opacity=".75"/><ellipse cx="201.2" cy="282.7" rx="12.0" ry="10.0" fill="none" stroke="#fbc8cf" stroke-width="1.6" opacity="0.39"/><ellipse cx="201.2" cy="282.7" rx="11.0" ry="9.0" fill="#cc0816"/><ellipse cx="201.2" cy="283.7" rx="6.6" ry="5.4" fill="#b80612" opacity=".6"/><path d="M190.7 283.6A11.0 9.5 0 0 0 211.6 283.6" fill="none" stroke="#f9b4bc" stroke-width="1.8" opacity="0.49"/><ellipse cx="201.7" cy="284.2" rx="3.6" ry="2.6" fill="#d68a3c" opacity=".75"/><ellipse cx="226.7" cy="276.7" rx="12.0" ry="10.0" fill="none" stroke="#fbc8cf" stroke-width="1.6" opacity="0.45"/><ellipse cx="226.7" cy="276.7" rx="11.0" ry="9.0" fill="#cc0816"/><ellipse cx="226.7" cy="277.7" rx="6.6" ry="5.4" fill="#b80612" opacity=".6"/><path d="M216.2 277.6A11.0 9.5 0 0 0 237.1 277.6" fill="none" stroke="#f9b4bc" stroke-width="1.8" opacity="0.56"/><ellipse cx="227.2" cy="278.2" rx="3.6" ry="2.6" fill="#d68a3c" opacity=".75"/><ellipse cx="252.8" cy="271.2" rx="12.0" ry="10.0" fill="none" stroke="#fbc8cf" stroke-width="1.6" opacity="0.48"/><ellipse cx="252.8" cy="271.2" rx="11.0" ry="9.0" fill="#cc0816"/><ellipse cx="252.8" cy="272.2" rx="6.6" ry="5.4" fill="#b80612" opacity=".6"/><path d="M242.3 272.1A11.0 9.5 0 0 0 263.2 272.1" fill="none" stroke="#f9b4bc" stroke-width="1.8" opacity="0.60"/><ellipse cx="253.3" cy="272.7" rx="3.6" ry="2.6" fill="#d68a3c" opacity=".75"/><ellipse cx="275.9" cy="265.5" rx="12.0" ry="10.0" fill="none" stroke="#fbc8cf" stroke-width="1.6" opacity="0.50"/><ellipse cx="275.9" cy="265.5" rx="11.0" ry="9.0" fill="#cc0816"/><ellipse cx="275.9" cy="266.5" rx="6.6" ry="5.4" fill="#b80612" opacity=".6"/><path d="M265.5 266.4A11.0 9.5 0 0 0 286.4 266.4" fill="none" stroke="#f9b4bc" stroke-width="1.8" opacity="0.62"/><ellipse cx="276.4" cy="267.0" rx="3.6" ry="2.6" fill="#d68a3c" opacity=".75"/><ellipse cx="300.5" cy="258.0" rx="12.0" ry="10.0" fill="none" stroke="#fbc8cf" stroke-width="1.6" opacity="0.51"/><ellipse cx="300.5" cy="258.0" rx="11.0" ry="9.0" fill="#cc0816"/><ellipse cx="300.5" cy="259.0" rx="6.6" ry="5.4" fill="#b80612" opacity=".6"/><path d="M290.1 258.9A11.0 9.5 0 0 0 311.0 258.9" fill="none" stroke="#f9b4bc" stroke-width="1.8" opacity="0.63"/><ellipse cx="301.0" cy="259.5" rx="3.6" ry="2.6" fill="#d68a3c" opacity=".75"/><ellipse cx="326.9" cy="250.9" rx="12.0" ry="10.0" fill="none" stroke="#fbc8cf" stroke-width="1.6" opacity="0.49"/><ellipse cx="326.9" cy="250.9" rx="11.0" ry="9.0" fill="#cc0816"/><ellipse cx="326.9" cy="251.9" rx="6.6" ry="5.4" fill="#b80612" opacity=".6"/><path d="M316.4 251.8A11.0 9.5 0 0 0 337.3 251.8" fill="none" stroke="#f9b4bc" stroke-width="1.8" opacity="0.61"/><ellipse cx="327.4" cy="252.4" rx="3.6" ry="2.6" fill="#d68a3c" opacity=".75"/><ellipse cx="351.0" cy="246.2" rx="12.0" ry="10.0" fill="none" stroke="#fbc8cf" stroke-width="1.6" opacity="0.45"/><ellipse cx="351.0" cy="246.2" rx="11.0" ry="9.0" fill="#cc0816"/><ellipse cx="351.0" cy="247.2" rx="6.6" ry="5.4" fill="#b80612" opacity=".6"/><path d="M340.6 247.1A11.0 9.5 0 0 0 361.5 247.1" fill="none" stroke="#f9b4bc" stroke-width="1.8" opacity="0.57"/><ellipse cx="351.5" cy="247.7" rx="3.6" ry="2.6" fill="#d68a3c" opacity=".75"/><ellipse cx="376.1" cy="239.2" rx="12.0" ry="10.0" fill="none" stroke="#fbc8cf" stroke-width="1.6" opacity="0.40"/><ellipse cx="376.1" cy="239.2" rx="11.0" ry="9.0" fill="#cc0816"/><ellipse cx="376.1" cy="240.2" rx="6.6" ry="5.4" fill="#b80612" opacity=".6"/><path d="M365.7 240.1A11.0 9.5 0 0 0 386.6 240.1" fill="none" stroke="#f9b4bc" stroke-width="1.8" opacity="0.51"/><ellipse cx="376.6" cy="240.7" rx="3.6" ry="2.6" fill="#d68a3c" opacity=".75"/><ellipse cx="404.1" cy="231.7" rx="12.0" ry="10.0" fill="none" stroke="#fbc8cf" stroke-width="1.6" opacity="0.33"/><ellipse cx="404.1" cy="231.7" rx="11.0" ry="9.0" fill="#cc0816"/><ellipse cx="404.1" cy="232.7" rx="6.6" ry="5.4" fill="#b80612" opacity=".6"/><path d="M393.7 232.6A11.0 9.5 0 0 0 414.6 232.6" fill="none" stroke="#f9b4bc" stroke-width="1.8" opacity="0.41"/><ellipse cx="404.6" cy="233.2" rx="3.6" ry="2.6" fill="#d68a3c" opacity=".75"/><ellipse cx="427.1" cy="226.8" rx="10.4" ry="8.7" fill="none" stroke="#fbc8cf" stroke-width="1.4" opacity="0.24"/><ellipse cx="427.1" cy="226.8" rx="9.4" ry="7.7" fill="#cc0816"/><ellipse cx="427.1" cy="227.8" rx="5.6" ry="4.6" fill="#b80612" opacity=".6"/><path d="M418.2 227.6A9.4 8.1 0 0 0 436.1 227.6" fill="none" stroke="#f9b4bc" stroke-width="1.6" opacity="0.31"/><ellipse cx="427.6" cy="228.1" rx="3.1" ry="2.2" fill="#d68a3c" opacity=".75"/><ellipse cx="144.5" cy="319.2" rx="11.5" ry="9.6" fill="none" stroke="#fbc8cf" stroke-width="1.5" opacity="0.16"/><ellipse cx="144.5" cy="319.2" rx="10.5" ry="8.6" fill="#cc0816"/><ellipse cx="144.5" cy="320.2" rx="6.3" ry="5.2" fill="#b80612" opacity=".6"/><path d="M134.5 320.1A10.5 9.0 0 0 0 154.5 320.1" fill="none" stroke="#f9b4bc" stroke-width="1.7" opacity="0.20"/><ellipse cx="145.0" cy="320.6" rx="3.4" ry="2.5" fill="#d68a3c" opacity=".75"/><ellipse cx="167.9" cy="313.6" rx="12.0" ry="10.0" fill="none" stroke="#fbc8cf" stroke-width="1.6" opacity="0.16"/><ellipse cx="167.9" cy="313.6" rx="11.0" ry="9.0" fill="#cc0816"/><ellipse cx="167.9" cy="314.6" rx="6.6" ry="5.4" fill="#b80612" opacity=".6"/><path d="M157.4 314.5A11.0 9.5 0 0 0 178.3 314.5" fill="none" stroke="#f9b4bc" stroke-width="1.8" opacity="0.20"/><ellipse cx="168.4" cy="315.1" rx="3.6" ry="2.6" fill="#d68a3c" opacity=".75"/><ellipse cx="194.6" cy="309.4" rx="12.0" ry="10.0" fill="none" stroke="#fbc8cf" stroke-width="1.6" opacity="0.21"/><ellipse cx="194.6" cy="309.4" rx="11.0" ry="9.0" fill="#cc0816"/><ellipse cx="194.6" cy="310.4" rx="6.6" ry="5.4" fill="#b80612" opacity=".6"/><path d="M184.1 310.3A11.0 9.5 0 0 0 205.0 310.3" fill="none" stroke="#f9b4bc" stroke-width="1.8" opacity="0.26"/><ellipse cx="195.1" cy="310.9" rx="3.6" ry="2.6" fill="#d68a3c" opacity=".75"/><ellipse cx="219.8" cy="301.3" rx="12.0" ry="10.0" fill="none" stroke="#fbc8cf" stroke-width="1.6" opacity="0.29"/><ellipse cx="219.8" cy="301.3" rx="11.0" ry="9.0" fill="#cc0816"/><ellipse cx="219.8" cy="302.3" rx="6.6" ry="5.4" fill="#b80612" opacity=".6"/><path d="M209.3 302.2A11.0 9.5 0 0 0 230.2 302.2" fill="none" stroke="#f9b4bc" stroke-width="1.8" opacity="0.36"/><ellipse cx="220.3" cy="302.8" rx="3.6" ry="2.6" fill="#d68a3c" opacity=".75"/><ellipse cx="245.4" cy="295.0" rx="12.0" ry="10.0" fill="none" stroke="#fbc8cf" stroke-width="1.6" opacity="0.34"/><ellipse cx="245.4" cy="295.0" rx="11.0" ry="9.0" fill="#cc0816"/><ellipse cx="245.4" cy="296.0" rx="6.6" ry="5.4" fill="#b80612" opacity=".6"/><path d="M235.0 295.9A11.0 9.5 0 0 0 255.9 295.9" fill="none" stroke="#f9b4bc" stroke-width="1.8" opacity="0.42"/><ellipse cx="245.9" cy="296.5" rx="3.6" ry="2.6" fill="#d68a3c" opacity=".75"/><ellipse cx="268.7" cy="290.4" rx="12.0" ry="10.0" fill="none" stroke="#fbc8cf" stroke-width="1.6" opacity="0.35"/><ellipse cx="268.7" cy="290.4" rx="11.0" ry="9.0" fill="#cc0816"/><ellipse cx="268.7" cy="291.4" rx="6.6" ry="5.4" fill="#b80612" opacity=".6"/><path d="M258.3 291.3A11.0 9.5 0 0 0 279.2 291.3" fill="none" stroke="#f9b4bc" stroke-width="1.8" opacity="0.44"/><ellipse cx="269.2" cy="291.9" rx="3.6" ry="2.6" fill="#d68a3c" opacity=".75"/><ellipse cx="295.1" cy="283.5" rx="12.0" ry="10.0" fill="none" stroke="#fbc8cf" stroke-width="1.6" opacity="0.37"/><ellipse cx="295.1" cy="283.5" rx="11.0" ry="9.0" fill="#cc0816"/><ellipse cx="295.1" cy="284.5" rx="6.6" ry="5.4" fill="#b80612" opacity=".6"/><path d="M284.7 284.4A11.0 9.5 0 0 0 305.6 284.4" fill="none" stroke="#f9b4bc" stroke-width="1.8" opacity="0.46"/><ellipse cx="295.6" cy="285.0" rx="3.6" ry="2.6" fill="#d68a3c" opacity=".75"/><ellipse cx="320.5" cy="278.1" rx="12.0" ry="10.0" fill="none" stroke="#fbc8cf" stroke-width="1.6" opacity="0.36"/><ellipse cx="320.5" cy="278.1" rx="11.0" ry="9.0" fill="#cc0816"/><ellipse cx="320.5" cy="279.1" rx="6.6" ry="5.4" fill="#b80612" opacity=".6"/><path d="M310.0 279.0A11.0 9.5 0 0 0 330.9 279.0" fill="none" stroke="#f9b4bc" stroke-width="1.8" opacity="0.45"/><ellipse cx="321.0" cy="279.6" rx="3.6" ry="2.6" fill="#d68a3c" opacity=".75"/><ellipse cx="345.1" cy="271.4" rx="12.0" ry="10.0" fill="none" stroke="#fbc8cf" stroke-width="1.6" opacity="0.34"/><ellipse cx="345.1" cy="271.4" rx="11.0" ry="9.0" fill="#cc0816"/><ellipse cx="345.1" cy="272.4" rx="6.6" ry="5.4" fill="#b80612" opacity=".6"/><path d="M334.7 272.3A11.0 9.5 0 0 0 355.6 272.3" fill="none" stroke="#f9b4bc" stroke-width="1.8" opacity="0.42"/><ellipse cx="345.6" cy="272.9" rx="3.6" ry="2.6" fill="#d68a3c" opacity=".75"/><ellipse cx="371.0" cy="265.1" rx="12.0" ry="10.0" fill="none" stroke="#fbc8cf" stroke-width="1.6" opacity="0.30"/><ellipse cx="371.0" cy="265.1" rx="11.0" ry="9.0" fill="#cc0816"/><ellipse cx="371.0" cy="266.1" rx="6.6" ry="5.4" fill="#b80612" opacity=".6"/><path d="M360.6 266.0A11.0 9.5 0 0 0 381.5 266.0" fill="none" stroke="#f9b4bc" stroke-width="1.8" opacity="0.37"/><ellipse cx="371.5" cy="266.6" rx="3.6" ry="2.6" fill="#d68a3c" opacity=".75"/><ellipse cx="395.5" cy="258.4" rx="12.0" ry="10.0" fill="none" stroke="#fbc8cf" stroke-width="1.6" opacity="0.24"/><ellipse cx="395.5" cy="258.4" rx="11.0" ry="9.0" fill="#cc0816"/><ellipse cx="395.5" cy="259.4" rx="6.6" ry="5.4" fill="#b80612" opacity=".6"/><path d="M385.0 259.3A11.0 9.5 0 0 0 405.9 259.3" fill="none" stroke="#f9b4bc" stroke-width="1.8" opacity="0.30"/><ellipse cx="396.0" cy="259.9" rx="3.6" ry="2.6" fill="#d68a3c" opacity=".75"/><ellipse cx="421.1" cy="250.9" rx="12.0" ry="10.0" fill="none" stroke="#fbc8cf" stroke-width="1.6" opacity="0.17"/><ellipse cx="421.1" cy="250.9" rx="11.0" ry="9.0" fill="#cc0816"/><ellipse cx="421.1" cy="251.9" rx="6.6" ry="5.4" fill="#b80612" opacity=".6"/><path d="M410.6 251.8A11.0 9.5 0 0 0 431.5 251.8" fill="none" stroke="#f9b4bc" stroke-width="1.8" opacity="0.21"/><ellipse cx="421.6" cy="252.4" rx="3.6" ry="2.6" fill="#d68a3c" opacity=".75"/><ellipse cx="445.2" cy="245.6" rx="9.4" ry="7.9" fill="none" stroke="#fbc8cf" stroke-width="1.2" opacity="0.16"/><ellipse cx="445.2" cy="245.6" rx="8.4" ry="6.9" fill="#cc0816"/><ellipse cx="445.2" cy="246.6" rx="5.1" ry="4.1" fill="#b80612" opacity=".6"/><path d="M437.2 246.2A8.4 7.2 0 0 0 453.2 246.2" fill="none" stroke="#f9b4bc" stroke-width="1.4" opacity="0.20"/><ellipse cx="445.7" cy="246.7" rx="2.8" ry="2.0" fill="#d68a3c" opacity=".75"/><ellipse cx="162.2" cy="338.5" rx="9.3" ry="7.8" fill="none" stroke="#fbc8cf" stroke-width="1.2" opacity="0.16"/><ellipse cx="162.2" cy="338.5" rx="8.3" ry="6.8" fill="#cc0816"/><ellipse cx="162.2" cy="339.5" rx="5.0" ry="4.1" fill="#b80612" opacity=".6"/><path d="M154.3 339.2A8.3 7.2 0 0 0 170.1 339.2" fill="none" stroke="#f9b4bc" stroke-width="1.4" opacity="0.20"/><ellipse cx="162.7" cy="339.6" rx="2.7" ry="2.0" fill="#d68a3c" opacity=".75"/><ellipse cx="186.1" cy="332.8" rx="12.0" ry="10.0" fill="none" stroke="#fbc8cf" stroke-width="1.6" opacity="0.16"/><ellipse cx="186.1" cy="332.8" rx="11.0" ry="9.0" fill="#cc0816"/><ellipse cx="186.1" cy="333.8" rx="6.6" ry="5.4" fill="#b80612" opacity=".6"/><path d="M175.7 333.7A11.0 9.5 0 0 0 196.6 333.7" fill="none" stroke="#f9b4bc" stroke-width="1.8" opacity="0.20"/><ellipse cx="186.6" cy="334.3" rx="3.6" ry="2.6" fill="#d68a3c" opacity=".75"/><ellipse cx="210.5" cy="326.0" rx="12.0" ry="10.0" fill="none" stroke="#fbc8cf" stroke-width="1.6" opacity="0.16"/><ellipse cx="210.5" cy="326.0" rx="11.0" ry="9.0" fill="#cc0816"/><ellipse cx="210.5" cy="327.0" rx="6.6" ry="5.4" fill="#b80612" opacity=".6"/><path d="M200.0 326.9A11.0 9.5 0 0 0 220.9 326.9" fill="none" stroke="#f9b4bc" stroke-width="1.8" opacity="0.20"/><ellipse cx="211.0" cy="327.5" rx="3.6" ry="2.6" fill="#d68a3c" opacity=".75"/><ellipse cx="236.5" cy="321.1" rx="12.0" ry="10.0" fill="none" stroke="#fbc8cf" stroke-width="1.6" opacity="0.16"/><ellipse cx="236.5" cy="321.1" rx="11.0" ry="9.0" fill="#cc0816"/><ellipse cx="236.5" cy="322.1" rx="6.6" ry="5.4" fill="#b80612" opacity=".6"/><path d="M226.0 322.0A11.0 9.5 0 0 0 246.9 322.0" fill="none" stroke="#f9b4bc" stroke-width="1.8" opacity="0.20"/><ellipse cx="237.0" cy="322.6" rx="3.6" ry="2.6" fill="#d68a3c" opacity=".75"/><ellipse cx="261.9" cy="313.7" rx="12.0" ry="10.0" fill="none" stroke="#fbc8cf" stroke-width="1.6" opacity="0.20"/><ellipse cx="261.9" cy="313.7" rx="11.0" ry="9.0" fill="#cc0816"/><ellipse cx="261.9" cy="314.7" rx="6.6" ry="5.4" fill="#b80612" opacity=".6"/><path d="M251.5 314.6A11.0 9.5 0 0 0 272.4 314.6" fill="none" stroke="#f9b4bc" stroke-width="1.8" opacity="0.25"/><ellipse cx="262.4" cy="315.2" rx="3.6" ry="2.6" fill="#d68a3c" opacity=".75"/><ellipse cx="289.0" cy="307.9" rx="12.0" ry="10.0" fill="none" stroke="#fbc8cf" stroke-width="1.6" opacity="0.22"/><ellipse cx="289.0" cy="307.9" rx="11.0" ry="9.0" fill="#cc0816"/><ellipse cx="289.0" cy="308.9" rx="6.6" ry="5.4" fill="#b80612" opacity=".6"/><path d="M278.5 308.8A11.0 9.5 0 0 0 299.4 308.8" fill="none" stroke="#f9b4bc" stroke-width="1.8" opacity="0.27"/><ellipse cx="289.5" cy="309.4" rx="3.6" ry="2.6" fill="#d68a3c" opacity=".75"/><ellipse cx="313.9" cy="302.0" rx="12.0" ry="10.0" fill="none" stroke="#fbc8cf" stroke-width="1.6" opacity="0.22"/><ellipse cx="313.9" cy="302.0" rx="11.0" ry="9.0" fill="#cc0816"/><ellipse cx="313.9" cy="303.0" rx="6.6" ry="5.4" fill="#b80612" opacity=".6"/><path d="M303.4 302.9A11.0 9.5 0 0 0 324.3 302.9" fill="none" stroke="#f9b4bc" stroke-width="1.8" opacity="0.27"/><ellipse cx="314.4" cy="303.5" rx="3.6" ry="2.6" fill="#d68a3c" opacity=".75"/><ellipse cx="336.6" cy="295.1" rx="12.0" ry="10.0" fill="none" stroke="#fbc8cf" stroke-width="1.6" opacity="0.22"/><ellipse cx="336.6" cy="295.1" rx="11.0" ry="9.0" fill="#cc0816"/><ellipse cx="336.6" cy="296.1" rx="6.6" ry="5.4" fill="#b80612" opacity=".6"/><path d="M326.2 296.0A11.0 9.5 0 0 0 347.1 296.0" fill="none" stroke="#f9b4bc" stroke-width="1.8" opacity="0.27"/><ellipse cx="337.1" cy="296.6" rx="3.6" ry="2.6" fill="#d68a3c" opacity=".75"/><ellipse cx="363.1" cy="289.9" rx="12.0" ry="10.0" fill="none" stroke="#fbc8cf" stroke-width="1.6" opacity="0.18"/><ellipse cx="363.1" cy="289.9" rx="11.0" ry="9.0" fill="#cc0816"/><ellipse cx="363.1" cy="290.9" rx="6.6" ry="5.4" fill="#b80612" opacity=".6"/><path d="M352.6 290.8A11.0 9.5 0 0 0 373.5 290.8" fill="none" stroke="#f9b4bc" stroke-width="1.8" opacity="0.22"/><ellipse cx="363.6" cy="291.4" rx="3.6" ry="2.6" fill="#d68a3c" opacity=".75"/><ellipse cx="388.0" cy="283.4" rx="12.0" ry="10.0" fill="none" stroke="#fbc8cf" stroke-width="1.6" opacity="0.16"/><ellipse cx="388.0" cy="283.4" rx="11.0" ry="9.0" fill="#cc0816"/><ellipse cx="388.0" cy="284.4" rx="6.6" ry="5.4" fill="#b80612" opacity=".6"/><path d="M377.6 284.3A11.0 9.5 0 0 0 398.5 284.3" fill="none" stroke="#f9b4bc" stroke-width="1.8" opacity="0.20"/><ellipse cx="388.5" cy="284.9" rx="3.6" ry="2.6" fill="#d68a3c" opacity=".75"/><ellipse cx="413.8" cy="275.6" rx="12.0" ry="10.0" fill="none" stroke="#fbc8cf" stroke-width="1.6" opacity="0.16"/><ellipse cx="413.8" cy="275.6" rx="11.0" ry="9.0" fill="#cc0816"/><ellipse cx="413.8" cy="276.6" rx="6.6" ry="5.4" fill="#b80612" opacity=".6"/><path d="M403.4 276.5A11.0 9.5 0 0 0 424.3 276.5" fill="none" stroke="#f9b4bc" stroke-width="1.8" opacity="0.20"/><ellipse cx="414.3" cy="277.1" rx="3.6" ry="2.6" fill="#d68a3c" opacity=".75"/><ellipse cx="440.0" cy="268.9" rx="12.0" ry="10.0" fill="none" stroke="#fbc8cf" stroke-width="1.6" opacity="0.16"/><ellipse cx="440.0" cy="268.9" rx="11.0" ry="9.0" fill="#cc0816"/><ellipse cx="440.0" cy="269.9" rx="6.6" ry="5.4" fill="#b80612" opacity=".6"/><path d="M429.6 269.8A11.0 9.5 0 0 0 450.5 269.8" fill="none" stroke="#f9b4bc" stroke-width="1.8" opacity="0.20"/><ellipse cx="440.5" cy="270.4" rx="3.6" ry="2.6" fill="#d68a3c" opacity=".75"/><ellipse cx="465.1" cy="262.9" rx="7.2" ry="6.1" fill="none" stroke="#fbc8cf" stroke-width="0.9" opacity="0.16"/><ellipse cx="465.1" cy="262.9" rx="6.2" ry="5.1" fill="#cc0816"/><ellipse cx="465.1" cy="263.9" rx="3.7" ry="3.1" fill="#b80612" opacity=".6"/><path d="M459.2 263.4A6.2 5.3 0 0 0 471.0 263.4" fill="none" stroke="#f9b4bc" stroke-width="1.1" opacity="0.20"/><ellipse cx="465.6" cy="263.7" rx="2.0" ry="1.5" fill="#d68a3c" opacity=".75"/><ellipse cx="180.7" cy="358.0" rx="6.1" ry="5.2" fill="none" stroke="#fbc8cf" stroke-width="0.7" opacity="0.16"/><ellipse cx="180.7" cy="358.0" rx="5.1" ry="4.2" fill="#cc0816"/><ellipse cx="180.7" cy="359.0" rx="3.0" ry="2.5" fill="#b80612" opacity=".6"/><path d="M175.9 358.5A5.1 4.4 0 0 0 185.5 358.5" fill="none" stroke="#f9b4bc" stroke-width="1.0" opacity="0.20"/><ellipse cx="181.2" cy="358.7" rx="1.7" ry="1.2" fill="#d68a3c" opacity=".75"/><ellipse cx="204.4" cy="352.9" rx="9.1" ry="7.6" fill="none" stroke="#fbc8cf" stroke-width="1.2" opacity="0.16"/><ellipse cx="204.4" cy="352.9" rx="8.1" ry="6.6" fill="#cc0816"/><ellipse cx="204.4" cy="353.9" rx="4.8" ry="4.0" fill="#b80612" opacity=".6"/><path d="M196.7 353.6A8.1 6.9 0 0 0 212.0 353.6" fill="none" stroke="#f9b4bc" stroke-width="1.4" opacity="0.20"/><ellipse cx="204.9" cy="354.0" rx="2.6" ry="1.9" fill="#d68a3c" opacity=".75"/><ellipse cx="229.1" cy="345.3" rx="11.4" ry="9.5" fill="none" stroke="#fbc8cf" stroke-width="1.5" opacity="0.16"/><ellipse cx="229.1" cy="345.3" rx="10.4" ry="8.5" fill="#cc0816"/><ellipse cx="229.1" cy="346.3" rx="6.2" ry="5.1" fill="#b80612" opacity=".6"/><path d="M219.3 346.2A10.4 8.9 0 0 0 239.0 346.2" fill="none" stroke="#f9b4bc" stroke-width="1.7" opacity="0.20"/><ellipse cx="229.6" cy="346.8" rx="3.4" ry="2.5" fill="#d68a3c" opacity=".75"/><ellipse cx="255.3" cy="339.9" rx="12.0" ry="10.0" fill="none" stroke="#fbc8cf" stroke-width="1.6" opacity="0.16"/><ellipse cx="255.3" cy="339.9" rx="11.0" ry="9.0" fill="#cc0816"/><ellipse cx="255.3" cy="340.9" rx="6.6" ry="5.4" fill="#b80612" opacity=".6"/><path d="M244.8 340.8A11.0 9.5 0 0 0 265.7 340.8" fill="none" stroke="#f9b4bc" stroke-width="1.8" opacity="0.20"/><ellipse cx="255.8" cy="341.4" rx="3.6" ry="2.6" fill="#d68a3c" opacity=".75"/><ellipse cx="281.2" cy="333.3" rx="12.0" ry="10.0" fill="none" stroke="#fbc8cf" stroke-width="1.6" opacity="0.16"/><ellipse cx="281.2" cy="333.3" rx="11.0" ry="9.0" fill="#cc0816"/><ellipse cx="281.2" cy="334.3" rx="6.6" ry="5.4" fill="#b80612" opacity=".6"/><path d="M270.7 334.2A11.0 9.5 0 0 0 291.6 334.2" fill="none" stroke="#f9b4bc" stroke-width="1.8" opacity="0.20"/><ellipse cx="281.7" cy="334.8" rx="3.6" ry="2.6" fill="#d68a3c" opacity=".75"/><ellipse cx="305.2" cy="326.1" rx="12.0" ry="10.0" fill="none" stroke="#fbc8cf" stroke-width="1.6" opacity="0.16"/><ellipse cx="305.2" cy="326.1" rx="11.0" ry="9.0" fill="#cc0816"/><ellipse cx="305.2" cy="327.1" rx="6.6" ry="5.4" fill="#b80612" opacity=".6"/><path d="M294.7 327.0A11.0 9.5 0 0 0 315.6 327.0" fill="none" stroke="#f9b4bc" stroke-width="1.8" opacity="0.20"/><ellipse cx="305.7" cy="327.6" rx="3.6" ry="2.6" fill="#d68a3c" opacity=".75"/><ellipse cx="329.8" cy="321.3" rx="12.0" ry="10.0" fill="none" stroke="#fbc8cf" stroke-width="1.6" opacity="0.16"/><ellipse cx="329.8" cy="321.3" rx="11.0" ry="9.0" fill="#cc0816"/><ellipse cx="329.8" cy="322.3" rx="6.6" ry="5.4" fill="#b80612" opacity=".6"/><path d="M319.4 322.2A11.0 9.5 0 0 0 340.3 322.2" fill="none" stroke="#f9b4bc" stroke-width="1.8" opacity="0.20"/><ellipse cx="330.3" cy="322.8" rx="3.6" ry="2.6" fill="#d68a3c" opacity=".75"/><ellipse cx="356.6" cy="314.7" rx="12.0" ry="10.0" fill="none" stroke="#fbc8cf" stroke-width="1.6" opacity="0.16"/><ellipse cx="356.6" cy="314.7" rx="11.0" ry="9.0" fill="#cc0816"/><ellipse cx="356.6" cy="315.7" rx="6.6" ry="5.4" fill="#b80612" opacity=".6"/><path d="M346.1 315.6A11.0 9.5 0 0 0 367.0 315.6" fill="none" stroke="#f9b4bc" stroke-width="1.8" opacity="0.20"/><ellipse cx="357.1" cy="316.2" rx="3.6" ry="2.6" fill="#d68a3c" opacity=".75"/><ellipse cx="380.3" cy="307.5" rx="12.0" ry="10.0" fill="none" stroke="#fbc8cf" stroke-width="1.6" opacity="0.16"/><ellipse cx="380.3" cy="307.5" rx="11.0" ry="9.0" fill="#cc0816"/><ellipse cx="380.3" cy="308.5" rx="6.6" ry="5.4" fill="#b80612" opacity=".6"/><path d="M369.9 308.4A11.0 9.5 0 0 0 390.8 308.4" fill="none" stroke="#f9b4bc" stroke-width="1.8" opacity="0.20"/><ellipse cx="380.8" cy="309.0" rx="3.6" ry="2.6" fill="#d68a3c" opacity=".75"/><ellipse cx="407.4" cy="301.7" rx="12.0" ry="10.0" fill="none" stroke="#fbc8cf" stroke-width="1.6" opacity="0.16"/><ellipse cx="407.4" cy="301.7" rx="11.0" ry="9.0" fill="#cc0816"/><ellipse cx="407.4" cy="302.7" rx="6.6" ry="5.4" fill="#b80612" opacity=".6"/><path d="M396.9 302.6A11.0 9.5 0 0 0 417.8 302.6" fill="none" stroke="#f9b4bc" stroke-width="1.8" opacity="0.20"/><ellipse cx="407.9" cy="303.2" rx="3.6" ry="2.6" fill="#d68a3c" opacity=".75"/><ellipse cx="430.6" cy="295.0" rx="12.0" ry="10.0" fill="none" stroke="#fbc8cf" stroke-width="1.6" opacity="0.16"/><ellipse cx="430.6" cy="295.0" rx="11.0" ry="9.0" fill="#cc0816"/><ellipse cx="430.6" cy="296.0" rx="6.6" ry="5.4" fill="#b80612" opacity=".6"/><path d="M420.2 295.9A11.0 9.5 0 0 0 441.1 295.9" fill="none" stroke="#f9b4bc" stroke-width="1.8" opacity="0.20"/><ellipse cx="431.1" cy="296.5" rx="3.6" ry="2.6" fill="#d68a3c" opacity=".75"/><ellipse cx="458.2" cy="288.1" rx="10.6" ry="8.9" fill="none" stroke="#fbc8cf" stroke-width="1.4" opacity="0.16"/><ellipse cx="458.2" cy="288.1" rx="9.6" ry="7.9" fill="#cc0816"/><ellipse cx="458.2" cy="289.1" rx="5.8" ry="4.7" fill="#b80612" opacity=".6"/><path d="M449.0 288.9A9.6 8.3 0 0 0 467.3 288.9" fill="none" stroke="#f9b4bc" stroke-width="1.6" opacity="0.20"/><ellipse cx="458.7" cy="289.4" rx="3.2" ry="2.3" fill="#d68a3c" opacity=".75"/><ellipse cx="247.8" cy="363.3" rx="6.3" ry="5.4" fill="none" stroke="#fbc8cf" stroke-width="0.8" opacity="0.16"/><ellipse cx="247.8" cy="363.3" rx="5.3" ry="4.4" fill="#cc0816"/><ellipse cx="247.8" cy="364.3" rx="3.2" ry="2.6" fill="#b80612" opacity=".6"/><path d="M242.7 363.8A5.3 4.6 0 0 0 252.8 363.8" fill="none" stroke="#f9b4bc" stroke-width="1.0" opacity="0.20"/><ellipse cx="248.3" cy="364.1" rx="1.7" ry="1.3" fill="#d68a3c" opacity=".75"/><ellipse cx="273.9" cy="359.0" rx="7.4" ry="6.2" fill="none" stroke="#fbc8cf" stroke-width="0.9" opacity="0.16"/><ellipse cx="273.9" cy="359.0" rx="6.4" ry="5.2" fill="#cc0816"/><ellipse cx="273.9" cy="360.0" rx="3.8" ry="3.1" fill="#b80612" opacity=".6"/><path d="M267.8 359.5A6.4 5.5 0 0 0 280.0 359.5" fill="none" stroke="#f9b4bc" stroke-width="1.2" opacity="0.20"/><ellipse cx="274.4" cy="359.9" rx="2.1" ry="1.5" fill="#d68a3c" opacity=".75"/><ellipse cx="299.3" cy="352.2" rx="8.8" ry="7.4" fill="none" stroke="#fbc8cf" stroke-width="1.1" opacity="0.16"/><ellipse cx="299.3" cy="352.2" rx="7.8" ry="6.4" fill="#cc0816"/><ellipse cx="299.3" cy="353.2" rx="4.7" ry="3.8" fill="#b80612" opacity=".6"/><path d="M291.9 352.8A7.8 6.7 0 0 0 306.7 352.8" fill="none" stroke="#f9b4bc" stroke-width="1.4" opacity="0.20"/><ellipse cx="299.8" cy="353.2" rx="2.5" ry="1.8" fill="#d68a3c" opacity=".75"/><ellipse cx="324.7" cy="345.8" rx="9.9" ry="8.3" fill="none" stroke="#fbc8cf" stroke-width="1.3" opacity="0.16"/><ellipse cx="324.7" cy="345.8" rx="8.9" ry="7.3" fill="#cc0816"/><ellipse cx="324.7" cy="346.8" rx="5.3" ry="4.4" fill="#b80612" opacity=".6"/><path d="M316.3 346.5A8.9 7.6 0 0 0 333.2 346.5" fill="none" stroke="#f9b4bc" stroke-width="1.5" opacity="0.20"/><ellipse cx="325.2" cy="347.0" rx="2.9" ry="2.1" fill="#d68a3c" opacity=".75"/><ellipse cx="349.3" cy="338.8" rx="10.7" ry="8.9" fill="none" stroke="#fbc8cf" stroke-width="1.4" opacity="0.16"/><ellipse cx="349.3" cy="338.8" rx="9.7" ry="7.9" fill="#cc0816"/><ellipse cx="349.3" cy="339.8" rx="5.8" ry="4.8" fill="#b80612" opacity=".6"/><path d="M340.1 339.6A9.7 8.3 0 0 0 358.5 339.6" fill="none" stroke="#f9b4bc" stroke-width="1.6" opacity="0.20"/><ellipse cx="349.8" cy="340.2" rx="3.2" ry="2.3" fill="#d68a3c" opacity=".75"/><ellipse cx="373.6" cy="333.1" rx="10.9" ry="9.1" fill="none" stroke="#fbc8cf" stroke-width="1.4" opacity="0.16"/><ellipse cx="373.6" cy="333.1" rx="9.9" ry="8.1" fill="#cc0816"/><ellipse cx="373.6" cy="334.1" rx="5.9" ry="4.9" fill="#b80612" opacity=".6"/><path d="M364.2 333.9A9.9 8.5 0 0 0 383.0 333.9" fill="none" stroke="#f9b4bc" stroke-width="1.6" opacity="0.20"/><ellipse cx="374.1" cy="334.4" rx="3.2" ry="2.3" fill="#d68a3c" opacity=".75"/><ellipse cx="398.2" cy="326.2" rx="11.1" ry="9.3" fill="none" stroke="#fbc8cf" stroke-width="1.5" opacity="0.16"/><ellipse cx="398.2" cy="326.2" rx="10.1" ry="8.3" fill="#cc0816"/><ellipse cx="398.2" cy="327.2" rx="6.1" ry="5.0" fill="#b80612" opacity=".6"/><path d="M388.5 327.0A10.1 8.7 0 0 0 407.8 327.0" fill="none" stroke="#f9b4bc" stroke-width="1.7" opacity="0.20"/><ellipse cx="398.7" cy="327.5" rx="3.3" ry="2.4" fill="#d68a3c" opacity=".75"/><ellipse cx="425.4" cy="320.8" rx="10.3" ry="8.6" fill="none" stroke="#fbc8cf" stroke-width="1.3" opacity="0.16"/><ellipse cx="425.4" cy="320.8" rx="9.3" ry="7.6" fill="#cc0816"/><ellipse cx="425.4" cy="321.8" rx="5.6" ry="4.5" fill="#b80612" opacity=".6"/><path d="M416.6 321.5A9.3 8.0 0 0 0 434.2 321.5" fill="none" stroke="#f9b4bc" stroke-width="1.6" opacity="0.20"/><ellipse cx="425.9" cy="322.0" rx="3.0" ry="2.2" fill="#d68a3c" opacity=".75"/><ellipse cx="450.2" cy="313.1" rx="8.5" ry="7.1" fill="none" stroke="#fbc8cf" stroke-width="1.1" opacity="0.16"/><ellipse cx="450.2" cy="313.1" rx="7.5" ry="6.1" fill="#cc0816"/><ellipse cx="450.2" cy="314.1" rx="4.5" ry="3.7" fill="#b80612" opacity=".6"/><path d="M443.1 313.7A7.5 6.4 0 0 0 457.3 313.7" fill="none" stroke="#f9b4bc" stroke-width="1.3" opacity="0.20"/><ellipse cx="450.7" cy="314.1" rx="2.4" ry="1.8" fill="#d68a3c" opacity=".75"/></g><rect width="500" height="417" fill="url(#sheen)"/><rect width="500" height="417" fill="url(#btm)"/></g>
</svg><svg style="left:-1px;top:-90px" width="1282" height="717" viewBox="0 0 1282 717">
<defs><filter id="as" x="-10%" y="-20%" width="130%" height="160%"><feDropShadow dx="1" dy="3" stdDeviation="2" flood-color="#000" flood-opacity=".5"/></filter></defs>
<g filter="url(#as)"><path d="M727 572L922 494" stroke="#e01818" stroke-width="3.5" stroke-linecap="round"/><path d="M942 487L914 490L921 503Z" fill="#e01818"/></g>
</svg></div>
<div id="panel" class="a">
  <div class="a" style="left:0;top:0;width:6px;height:626px;background:#2c2a2d"></div>
  <div class="txt" style="left:25px;top:25px;font-size:13px;font-weight:bold;letter-spacing:.8px">調整大小</div>
  <div class="a" style="left:24px;top:56px;width:184px;height:29px;border:2px solid #58575b;border-radius:15px"></div>
  <div class="txt li" style="left:50px;top:62px;font-size:13px;color:#e8e8e8">像素</div>
  <svg style="left:183px;top:67px" width="11" height="7" viewBox="0 0 11 7"><path d="M0.6 0.6L5.5 5.6L10.4 0.6" stroke="#ddd" stroke-width="1.3" fill="none"/></svg>
  <div class="txt" style="left:44px;top:102px;font-size:13px;color:#e8e8e8">寬度</div>
  <div class="txt" style="left:162px;top:102px;font-size:13px;color:#e8e8e8">高度</div>
  <div class="a" style="left:24px;top:126px;width:66px;height:23px;border:2px solid #58575b;border-radius:12px"></div>
  <div class="txt" style="left:44px;top:130px;font-size:13px;color:#e8e8e8">500</div>
  <svg style="left:108px;top:128px" width="15" height="18" viewBox="0 0 15 18"><path d="M4 8V5A3.5 3.5 0 0 1 11 5V8" stroke="#fff" stroke-width="1.8" fill="none"/><rect x="1.2" y="8" width="12.6" height="8.8" rx="1.5" stroke="#fff" stroke-width="1.8" fill="none"/><circle cx="7.5" cy="11.5" r="1.3" fill="#fff"/><path d="M7.5 12V14.2" stroke="#fff" stroke-width="1.4"/></svg>
  <div class="a" style="left:142px;top:126px;width:66px;height:23px;border:2px solid #58575b;border-radius:12px"></div>
  <div class="txt" style="left:163px;top:130px;font-size:13px;color:#e8e8e8">417</div>
  <div class="txt" style="left:24px;top:165px;font-size:13px;color:#e8e8e8;word-spacing:2px">AI 放大</div>
  <div class="a" style="left:176px;top:165px;width:32px;height:17px;border-radius:9px;background:#1f1e21"></div>
  <div class="a" style="left:177px;top:166px;width:15px;height:15px;border-radius:8px;background:#68666a"></div>
  <div class="a" style="left:7px;top:196px;width:216px;height:1px;background:#3a383c"></div>
  <div class="txt" style="left:25px;top:214px;font-size:13px;font-weight:bold;letter-spacing:.8px">預設大小</div>
  <div class="a" style="left:25px;top:240px;width:170px;height:12px;background:#1f1d20"></div>
  <div class="a" style="left:24px;top:245px;width:184px;height:254px;border:2px solid #8a898d;border-bottom-width:2px;border-radius:14px 14px 0 0;background:#2e2c2f"></div>
  <div class="a" style="left:26px;top:272px;width:172px;height:1px;background:#232226"></div>
  <div class="txt li" style="left:50px;top:252px;font-size:13px;color:#e8e8e8">原始</div>
  <svg style="left:183px;top:256px" width="11" height="7" viewBox="0 0 11 7"><path d="M0.6 0.6L5.3 5.2L10 0.6" stroke="#ddd" stroke-width="1.2" fill="none"/></svg>
  <div class="a" style="left:198px;top:272px;width:8px;height:225px;background:#1e1d20"></div>
  <div class="a" style="left:198px;top:291px;width:8px;height:187px;border-radius:4px;background:#5d5c60"></div>
  <div class="txt li" style="left:50px;top:278px;font-size:13px;color:#e8e8e8">800 × 600 像素</div><div class="txt li" style="left:50px;top:302px;font-size:13px;color:#e8e8e8">1024 × 768 像素</div><div class="txt li" style="left:50px;top:326px;font-size:13px;color:#e8e8e8">1280 × 800 像素</div><div class="txt li" style="left:50px;top:350px;font-size:13px;color:#e8e8e8">1280 × 960 像素</div><div class="txt li" style="left:50px;top:374px;font-size:13px;color:#e8e8e8">1680 × 1050 像素</div><div class="txt li" style="left:50px;top:398px;font-size:13px;color:#e8e8e8">1920 × 1200 像素</div><div class="txt li" style="left:50px;top:422px;font-size:13px;color:#e8e8e8">2048 × 1536 像素</div><div class="txt li" style="left:50px;top:446px;font-size:13px;color:#e8e8e8">3200 × 2400 像素</div>
  <div class="a" style="left:26px;top:476px;width:172px;height:22px;background:linear-gradient(#4a494d,#5a595d)"></div>
  <div class="a" style="left:34px;top:482px;width:9px;height:9px;border-radius:4px;background:#fff"></div>
  <div class="txt li" style="left:50px;top:479px;font-size:13px;font-weight:bold">原始</div>
  <div class="a" style="left:22px;top:237px;width:174px;height:237px;border:3px solid #d41a1a"></div>
  <div class="a" style="left:248px;top:120px;width:40px;height:40px;border-radius:20px;background:#302e31"></div><div class="a" style="left:248px;top:168px;width:40px;height:40px;border-radius:20px;background:#302e31"></div><div class="a" style="left:248px;top:216px;width:40px;height:40px;border-radius:20px;background:#302e31"></div><div class="a" style="left:248px;top:264px;width:40px;height:40px;border-radius:20px;background:#302e31"></div><div class="a" style="left:248px;top:312px;width:40px;height:40px;border-radius:20px;background:#302e31"></div><div class="a" style="left:248px;top:360px;width:40px;height:40px;border-radius:20px;background:#302e31"></div><div class="a" style="left:248px;top:408px;width:40px;height:40px;border-radius:20px;background:#e9505f"></div><div class="a" style="left:248px;top:456px;width:40px;height:40px;border-radius:20px;background:#302e31"></div>
</div>
<div id="bottom" class="a">
  <div class="div" style="left:40px"></div><div class="div" style="left:77px"></div><div class="div" style="left:264px"></div><div class="div" style="left:305px"></div>
  <div class="div" style="left:773px"></div><div class="div" style="left:814px"></div><div class="div" style="left:855px"></div>
  <svg style="left:11px;top:11px" width="18" height="18" viewBox="0 0 18 18"><g fill="#f4f4f4"><path d="M0 0H7V2H2V7H0Z"/><path d="M18 0H11V2H16V7H18Z"/><path d="M0 18H7V16H2V11H0Z"/><path d="M18 18H11V16H16V11H18Z"/></g><g stroke="#f4f4f4" stroke-width="1.9"><path d="M1.5 1.5L6.5 6.5M16.5 1.5L11.5 6.5M1.5 16.5L6.5 11.5M16.5 16.5L11.5 11.5"/></g></svg>
  <div class="txt" style="left:50px;top:13px;font-size:13px;color:#e8e8e8">1:1</div>
  <svg style="left:88px;top:12px" width="18" height="18" viewBox="0 0 18 18"><g stroke="#fff" stroke-width="1.7" fill="none"><circle cx="6.5" cy="6.5" r="5.2"/><path d="M10.5 10.5L16 16M4 6.5H9"/></g></svg>
  <div class="a" style="left:114px;top:19px;width:6px;height:3px;background:#d9606f"></div>
  <div class="a" style="left:120px;top:19px;width:57px;height:3px;background:#1a181b"></div>
  <div class="a" style="left:119px;top:14px;width:12px;height:12px;border-radius:6px;background:#e6e6e8"></div>
  <svg style="left:186px;top:12px" width="18" height="18" viewBox="0 0 18 18"><g stroke="#fff" stroke-width="1.7" fill="none"><circle cx="6.5" cy="6.5" r="5.2"/><path d="M10.5 10.5L16 16M4 6.5H9M6.5 4V9"/></g></svg>
  <div class="txt" style="left:217px;top:13px;font-size:13px;color:#e8e8e8">100%</div>
  <svg style="left:277px;top:10px" width="16" height="20" viewBox="0 0 16 20"><g fill="#5e5d61"><rect x="3.8" y="2" width="2.2" height="10" rx="1.1"/><rect x="7.2" y="0.7" width="2.2" height="11" rx="1.1"/><rect x="10.4" y="2.2" width="2.2" height="10" rx="1.1"/><rect x="13.3" y="4" width="2.1" height="9" rx="1.05"/><path d="M3.8 9.5H15.4V15C15.4 17.5 14 19 11.5 19H7.5C6 19 5.2 18.2 4.3 17L1 12.2C0.5 11.4 0.9 10.6 1.6 10.6C2.2 10.6 2.8 11 3.8 12Z"/></g></svg>
  <svg style="left:514px;top:12px" width="16" height="17" viewBox="0 0 16 17"><path d="M15 0.3V16.3L0.8 8.3Z" fill="#e8e8ea" stroke="#e8e8ea" stroke-width=".6" stroke-linejoin="round"/></svg>
  <svg style="left:551px;top:12px" width="16" height="17" viewBox="0 0 16 17"><path d="M1 0.3V16.3L15.2 8.3Z" fill="#e8e8ea" stroke="#e8e8ea" stroke-width=".6" stroke-linejoin="round"/></svg>
  <svg style="left:785px;top:11px" width="19" height="19" viewBox="0 0 19 19"><rect x="1" y="1" width="17" height="16.5" rx="1.5" stroke="#fff" stroke-width="2" fill="none"/><path d="M1.5 17L7.5 9.5L11.5 13L13.5 11L17.5 15.5V17Z" fill="#fff"/><circle cx="12.5" cy="5.8" r="1.9" fill="#fff"/></svg>
  <svg style="left:826px;top:10px" width="19" height="20" viewBox="0 0 19 20"><g stroke="#fff" stroke-width="2" fill="none"><path d="M1 4H18M6.5 4V1.5H12.5V4M3.5 4V18.5H15.5V4M7.5 7.5V15M11.5 7.5V15"/></g></svg>
  <div class="txt" style="left:883px;top:13px;font-size:13px;color:#e8e8e8;letter-spacing:.9px">500×417</div>
  <svg style="left:954px;top:10px" width="20" height="20" viewBox="0 0 20 20"><circle cx="10" cy="10" r="9" stroke="#fff" stroke-width="1.9" fill="none"/><path d="M10 8.5V15" stroke="#fff" stroke-width="2"/><circle cx="10" cy="5.3" r="1.3" fill="#fff"/></svg>
</div>
</div>
<svg style="left:0;top:0" width="1282" height="717" viewBox="0 0 1282 717"><g fill="#423f43">
<rect x="1148" y="662.5" width="40" height="5.5"/>
<rect x="1157.3" y="668" width="9" height="48"/>
<path d="M1169 672L1174 672L1186 684L1188 681L1188 694L1175 694L1178 691L1169 681Z"/>
<rect x="1171" y="694" width="44" height="5.5"/>
<rect x="1194" y="667" width="38" height="4.5"/>
<rect x="1196" y="676" width="20" height="4"/>
<rect x="1195" y="685" width="22" height="4"/>
<rect x="1193" y="694" width="26" height="4.5"/>
<rect x="1203" y="662" width="6" height="42"/>
<path d="M1217 662L1223 662L1237 703L1231 703Z"/>
<path d="M1226 668L1233 664L1235 666L1228 672Z"/>
<path d="M1239 663H1254V703H1239ZM1244 668V698H1249V668Z" fill-rule="evenodd"/>
<path d="M1256 663H1279.5V699H1272V694H1277V682H1262V699H1256ZM1262 668V677H1265V668ZM1270 668V677H1274V668Z" fill-rule="evenodd"/>
<rect x="1256" y="698" width="23.5" height="5"/>
</g>
<text x="1172" y="715.5" font-family="Liberation Sans" font-size="10.5" fill="#403e42" textLength="105" lengthAdjust="spacingAndGlyphs">www.xiazaiba.com</text>
</svg>
<svg style="left:0;top:0" width="1282" height="717" viewBox="0 0 1282 717">
<g stroke="#fff" stroke-width="2" fill="none">
 <path d="M1242.5 223.7H1263.5M1242.5 230.7H1263.5M1242.5 237.7H1263.5"/>
 <circle cx="1259" cy="223.7" r="2.7" fill="#302e31"/><circle cx="1247.3" cy="230.7" r="2.7" fill="#302e31"/><circle cx="1257.5" cy="237.7" r="2.7" fill="#302e31"/>
 <path d="M1251 279.5V277.5A4.6 4.6 0 1 1 1256.5 277.5V279.5" stroke-width="1.9"/>
 <path d="M1245.5 280H1262V284H1245.5Z" stroke-width="1.9"/><path d="M1245.5 288H1262" stroke-width="1.9"/>
 <path d="M1244 318H1258V332H1244Z"/><path d="M1261.5 321V336H1247"/>
 <circle cx="1253.2" cy="374.6" r="9.6"/>
 <path d="M1248.6 377.2A5 5 0 0 0 1257.8 377.2"/>
 <circle cx="1253" cy="419.3" r="6.2"/><circle cx="1249.3" cy="425.8" r="6.2"/><circle cx="1256.7" cy="425.8" r="6.2"/>
 <path d="M1247.5 461V475.5H1263M1243.5 465.5H1258.5V481"/>
 <path d="M1248 511H1250.5M1253 511H1256M1258.5 511H1261.5V514M1261.5 516.5V519.5M1261.5 522V525.5M1261.5 528H1258.5M1244.5 511H1245.5V513.5" stroke-width="2"/>
 <path d="M1244 559.5H1256M1250 559.5V575M1253.5 566H1263.5M1258.5 566V575"/>
</g>
<g fill="#fff">
 <circle cx="1254" cy="322" r="1.6"/>
 <path d="M1244 332L1249 325.5L1253 330L1255.5 327.5L1258 332Z"/>
 <circle cx="1249.8" cy="371.5" r="1.4"/><circle cx="1256.6" cy="371.5" r="1.4"/>
 <rect x="1243.5" y="517" width="12" height="12"/>
</g>
</svg>
</body></html>
